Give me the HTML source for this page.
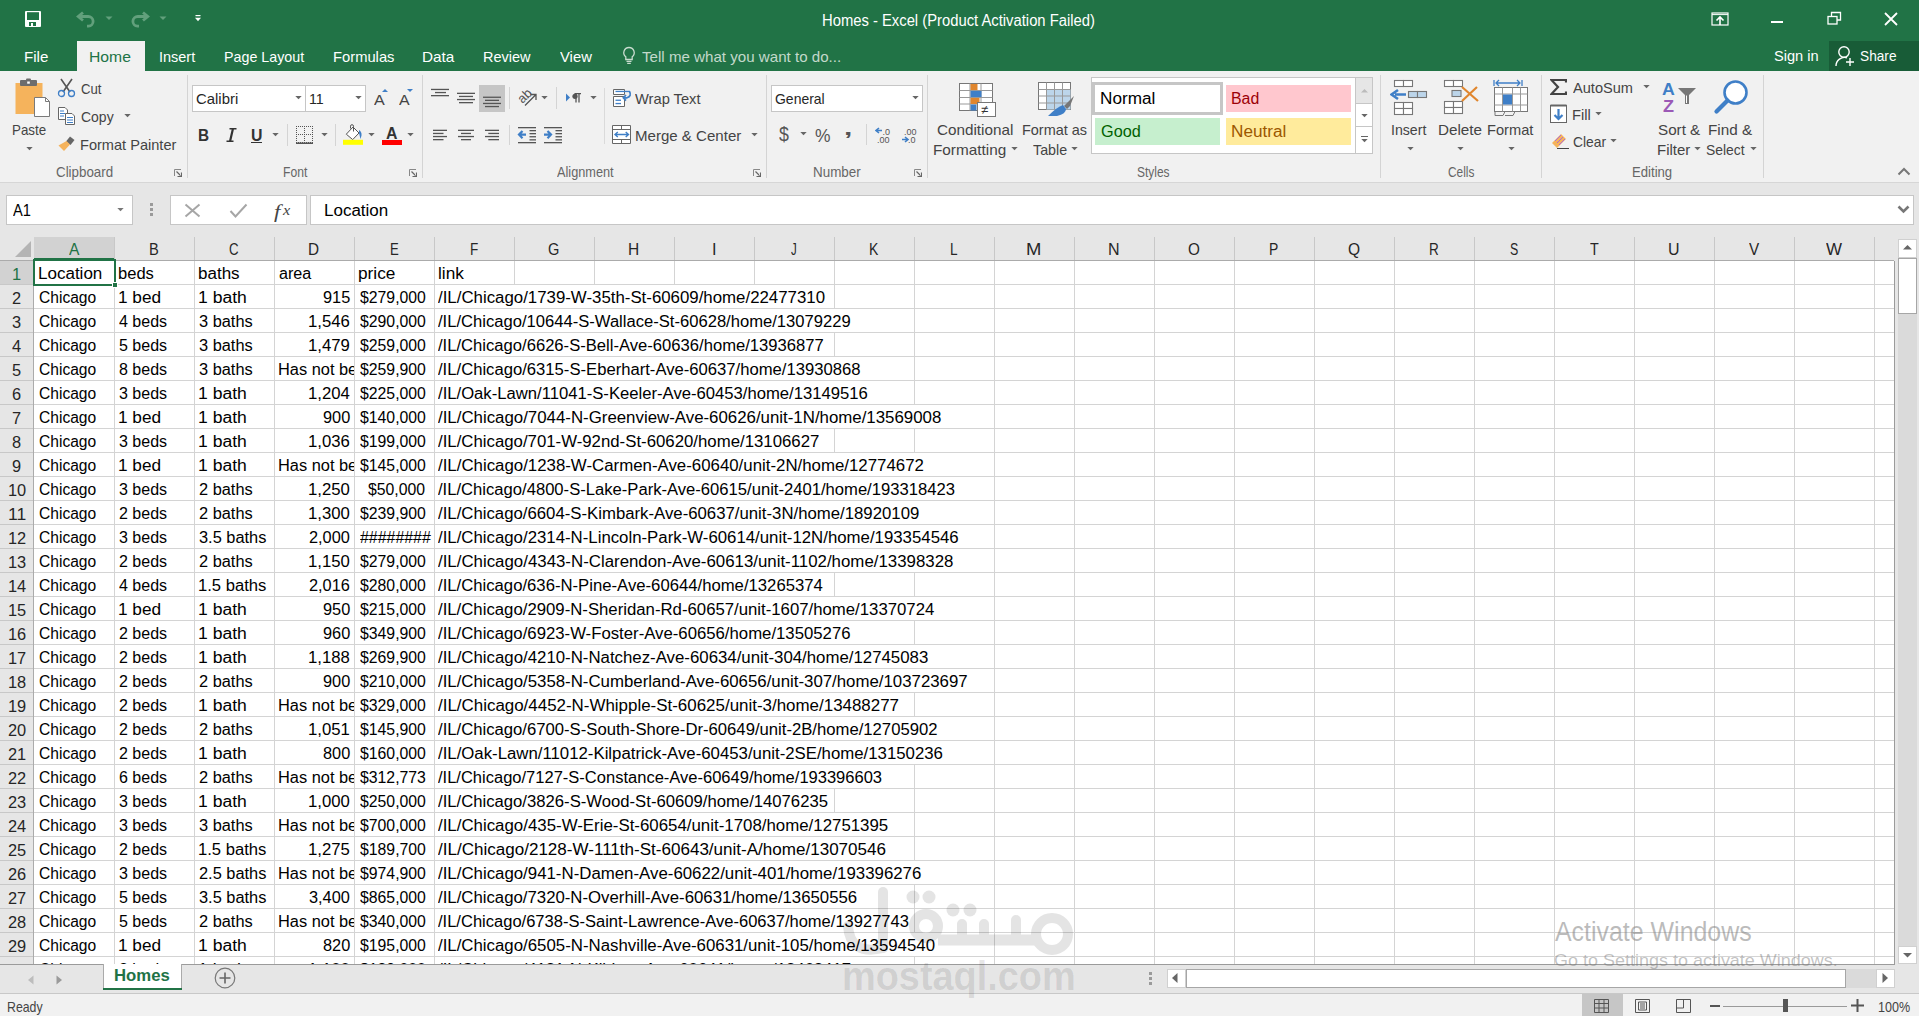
<!DOCTYPE html><html><head><meta charset="utf-8"><style>*{box-sizing:border-box;margin:0;padding:0}
html,body{width:1919px;height:1016px;overflow:hidden;background:#e6e6e6;font-family:"Liberation Sans",sans-serif}
.a{position:absolute}
.t{position:absolute;white-space:nowrap;line-height:1;transform-origin:0 0}
</style></head><body>
<div class="a" style="left:0px;top:0px;width:1919px;height:71px;background:#217346"></div>
<div class="a" style="left:0px;top:71px;width:1919px;height:112px;background:#f1f1f1"></div>
<div class="a" style="left:0px;top:182px;width:1919px;height:1px;background:#d6d6d6"></div>
<div class="a" style="left:0px;top:183px;width:1919px;height:54px;background:#e6e6e6"></div>
<div class="a" style="left:6px;top:195px;width:127px;height:30px;background:#fff;border:1px solid #c6c6c6"></div>
<div class="a" style="left:170px;top:195px;width:137px;height:30px;background:#fff;border:1px solid #c6c6c6"></div>
<div class="a" style="left:310px;top:195px;width:1604px;height:30px;background:#fff;border:1px solid #c6c6c6"></div>
<div class="a" style="left:0px;top:237px;width:1894px;height:24px;background:#e6e6e6"></div>
<div class="a" style="left:34px;top:237px;width:81px;height:23px;background:#d2d2d2"></div>
<div class="a" style="left:0px;top:260px;width:1894px;height:1px;background:#ababab"></div>
<div class="a" style="left:34px;top:258px;width:81px;height:2px;background:#217346"></div>
<div class="a" style="left:0px;top:261px;width:34px;height:703px;background:#e6e6e6"></div>
<div class="a" style="left:0px;top:261px;width:34px;height:23px;background:#d2d2d2"></div>
<div class="a" style="left:33px;top:261px;width:1px;height:703px;background:#ababab"></div>
<svg class="a" style="left:15px;top:241px" width="17" height="17"><polygon points="16,0 16,16 0,16" fill="#b4b4b4"/></svg>
<div class="a" style="left:34px;top:261px;width:1860px;height:703px;background:#fff"></div>
<div class="a" style="left:114px;top:261px;width:1px;height:703px;background:#d4d4d4"></div><div class="a" style="left:114px;top:237px;width:1px;height:23px;background:#c8c8c8"></div><div class="a" style="left:194px;top:261px;width:1px;height:703px;background:#d4d4d4"></div><div class="a" style="left:194px;top:237px;width:1px;height:23px;background:#c8c8c8"></div><div class="a" style="left:274px;top:261px;width:1px;height:703px;background:#d4d4d4"></div><div class="a" style="left:274px;top:237px;width:1px;height:23px;background:#c8c8c8"></div><div class="a" style="left:354px;top:261px;width:1px;height:703px;background:#d4d4d4"></div><div class="a" style="left:354px;top:237px;width:1px;height:23px;background:#c8c8c8"></div><div class="a" style="left:434px;top:261px;width:1px;height:703px;background:#d4d4d4"></div><div class="a" style="left:434px;top:237px;width:1px;height:23px;background:#c8c8c8"></div><div class="a" style="left:514px;top:261px;width:1px;height:703px;background:#d4d4d4"></div><div class="a" style="left:514px;top:237px;width:1px;height:23px;background:#c8c8c8"></div><div class="a" style="left:594px;top:261px;width:1px;height:703px;background:#d4d4d4"></div><div class="a" style="left:594px;top:237px;width:1px;height:23px;background:#c8c8c8"></div><div class="a" style="left:674px;top:261px;width:1px;height:703px;background:#d4d4d4"></div><div class="a" style="left:674px;top:237px;width:1px;height:23px;background:#c8c8c8"></div><div class="a" style="left:754px;top:261px;width:1px;height:703px;background:#d4d4d4"></div><div class="a" style="left:754px;top:237px;width:1px;height:23px;background:#c8c8c8"></div><div class="a" style="left:834px;top:261px;width:1px;height:703px;background:#d4d4d4"></div><div class="a" style="left:834px;top:237px;width:1px;height:23px;background:#c8c8c8"></div><div class="a" style="left:914px;top:261px;width:1px;height:703px;background:#d4d4d4"></div><div class="a" style="left:914px;top:237px;width:1px;height:23px;background:#c8c8c8"></div><div class="a" style="left:994px;top:261px;width:1px;height:703px;background:#d4d4d4"></div><div class="a" style="left:994px;top:237px;width:1px;height:23px;background:#c8c8c8"></div><div class="a" style="left:1074px;top:261px;width:1px;height:703px;background:#d4d4d4"></div><div class="a" style="left:1074px;top:237px;width:1px;height:23px;background:#c8c8c8"></div><div class="a" style="left:1154px;top:261px;width:1px;height:703px;background:#d4d4d4"></div><div class="a" style="left:1154px;top:237px;width:1px;height:23px;background:#c8c8c8"></div><div class="a" style="left:1234px;top:261px;width:1px;height:703px;background:#d4d4d4"></div><div class="a" style="left:1234px;top:237px;width:1px;height:23px;background:#c8c8c8"></div><div class="a" style="left:1314px;top:261px;width:1px;height:703px;background:#d4d4d4"></div><div class="a" style="left:1314px;top:237px;width:1px;height:23px;background:#c8c8c8"></div><div class="a" style="left:1394px;top:261px;width:1px;height:703px;background:#d4d4d4"></div><div class="a" style="left:1394px;top:237px;width:1px;height:23px;background:#c8c8c8"></div><div class="a" style="left:1474px;top:261px;width:1px;height:703px;background:#d4d4d4"></div><div class="a" style="left:1474px;top:237px;width:1px;height:23px;background:#c8c8c8"></div><div class="a" style="left:1554px;top:261px;width:1px;height:703px;background:#d4d4d4"></div><div class="a" style="left:1554px;top:237px;width:1px;height:23px;background:#c8c8c8"></div><div class="a" style="left:1634px;top:261px;width:1px;height:703px;background:#d4d4d4"></div><div class="a" style="left:1634px;top:237px;width:1px;height:23px;background:#c8c8c8"></div><div class="a" style="left:1714px;top:261px;width:1px;height:703px;background:#d4d4d4"></div><div class="a" style="left:1714px;top:237px;width:1px;height:23px;background:#c8c8c8"></div><div class="a" style="left:1794px;top:261px;width:1px;height:703px;background:#d4d4d4"></div><div class="a" style="left:1794px;top:237px;width:1px;height:23px;background:#c8c8c8"></div><div class="a" style="left:1874px;top:261px;width:1px;height:703px;background:#d4d4d4"></div><div class="a" style="left:1874px;top:237px;width:1px;height:23px;background:#c8c8c8"></div><div class="a" style="left:34px;top:284px;width:1860px;height:1px;background:#d4d4d4"></div><div class="a" style="left:0;top:284px;width:33px;height:1px;background:#c8c8c8"></div><div class="a" style="left:34px;top:308px;width:1860px;height:1px;background:#d4d4d4"></div><div class="a" style="left:0;top:308px;width:33px;height:1px;background:#c8c8c8"></div><div class="a" style="left:34px;top:332px;width:1860px;height:1px;background:#d4d4d4"></div><div class="a" style="left:0;top:332px;width:33px;height:1px;background:#c8c8c8"></div><div class="a" style="left:34px;top:356px;width:1860px;height:1px;background:#d4d4d4"></div><div class="a" style="left:0;top:356px;width:33px;height:1px;background:#c8c8c8"></div><div class="a" style="left:34px;top:380px;width:1860px;height:1px;background:#d4d4d4"></div><div class="a" style="left:0;top:380px;width:33px;height:1px;background:#c8c8c8"></div><div class="a" style="left:34px;top:404px;width:1860px;height:1px;background:#d4d4d4"></div><div class="a" style="left:0;top:404px;width:33px;height:1px;background:#c8c8c8"></div><div class="a" style="left:34px;top:428px;width:1860px;height:1px;background:#d4d4d4"></div><div class="a" style="left:0;top:428px;width:33px;height:1px;background:#c8c8c8"></div><div class="a" style="left:34px;top:452px;width:1860px;height:1px;background:#d4d4d4"></div><div class="a" style="left:0;top:452px;width:33px;height:1px;background:#c8c8c8"></div><div class="a" style="left:34px;top:476px;width:1860px;height:1px;background:#d4d4d4"></div><div class="a" style="left:0;top:476px;width:33px;height:1px;background:#c8c8c8"></div><div class="a" style="left:34px;top:500px;width:1860px;height:1px;background:#d4d4d4"></div><div class="a" style="left:0;top:500px;width:33px;height:1px;background:#c8c8c8"></div><div class="a" style="left:34px;top:524px;width:1860px;height:1px;background:#d4d4d4"></div><div class="a" style="left:0;top:524px;width:33px;height:1px;background:#c8c8c8"></div><div class="a" style="left:34px;top:548px;width:1860px;height:1px;background:#d4d4d4"></div><div class="a" style="left:0;top:548px;width:33px;height:1px;background:#c8c8c8"></div><div class="a" style="left:34px;top:572px;width:1860px;height:1px;background:#d4d4d4"></div><div class="a" style="left:0;top:572px;width:33px;height:1px;background:#c8c8c8"></div><div class="a" style="left:34px;top:596px;width:1860px;height:1px;background:#d4d4d4"></div><div class="a" style="left:0;top:596px;width:33px;height:1px;background:#c8c8c8"></div><div class="a" style="left:34px;top:620px;width:1860px;height:1px;background:#d4d4d4"></div><div class="a" style="left:0;top:620px;width:33px;height:1px;background:#c8c8c8"></div><div class="a" style="left:34px;top:644px;width:1860px;height:1px;background:#d4d4d4"></div><div class="a" style="left:0;top:644px;width:33px;height:1px;background:#c8c8c8"></div><div class="a" style="left:34px;top:668px;width:1860px;height:1px;background:#d4d4d4"></div><div class="a" style="left:0;top:668px;width:33px;height:1px;background:#c8c8c8"></div><div class="a" style="left:34px;top:692px;width:1860px;height:1px;background:#d4d4d4"></div><div class="a" style="left:0;top:692px;width:33px;height:1px;background:#c8c8c8"></div><div class="a" style="left:34px;top:716px;width:1860px;height:1px;background:#d4d4d4"></div><div class="a" style="left:0;top:716px;width:33px;height:1px;background:#c8c8c8"></div><div class="a" style="left:34px;top:740px;width:1860px;height:1px;background:#d4d4d4"></div><div class="a" style="left:0;top:740px;width:33px;height:1px;background:#c8c8c8"></div><div class="a" style="left:34px;top:764px;width:1860px;height:1px;background:#d4d4d4"></div><div class="a" style="left:0;top:764px;width:33px;height:1px;background:#c8c8c8"></div><div class="a" style="left:34px;top:788px;width:1860px;height:1px;background:#d4d4d4"></div><div class="a" style="left:0;top:788px;width:33px;height:1px;background:#c8c8c8"></div><div class="a" style="left:34px;top:812px;width:1860px;height:1px;background:#d4d4d4"></div><div class="a" style="left:0;top:812px;width:33px;height:1px;background:#c8c8c8"></div><div class="a" style="left:34px;top:836px;width:1860px;height:1px;background:#d4d4d4"></div><div class="a" style="left:0;top:836px;width:33px;height:1px;background:#c8c8c8"></div><div class="a" style="left:34px;top:860px;width:1860px;height:1px;background:#d4d4d4"></div><div class="a" style="left:0;top:860px;width:33px;height:1px;background:#c8c8c8"></div><div class="a" style="left:34px;top:884px;width:1860px;height:1px;background:#d4d4d4"></div><div class="a" style="left:0;top:884px;width:33px;height:1px;background:#c8c8c8"></div><div class="a" style="left:34px;top:908px;width:1860px;height:1px;background:#d4d4d4"></div><div class="a" style="left:0;top:908px;width:33px;height:1px;background:#c8c8c8"></div><div class="a" style="left:34px;top:932px;width:1860px;height:1px;background:#d4d4d4"></div><div class="a" style="left:0;top:932px;width:33px;height:1px;background:#c8c8c8"></div><div class="a" style="left:34px;top:956px;width:1860px;height:1px;background:#d4d4d4"></div><div class="a" style="left:0;top:956px;width:33px;height:1px;background:#c8c8c8"></div>
<div class="a" style="left:514px;top:285px;width:241px;height:23px;background:#fff"></div>
<div class="a" style="left:514px;top:309px;width:321px;height:23px;background:#fff"></div>
<div class="a" style="left:514px;top:333px;width:241px;height:23px;background:#fff"></div>
<div class="a" style="left:514px;top:357px;width:321px;height:23px;background:#fff"></div>
<div class="a" style="left:514px;top:381px;width:321px;height:23px;background:#fff"></div>
<div class="a" style="left:514px;top:405px;width:401px;height:23px;background:#fff"></div>
<div class="a" style="left:514px;top:429px;width:241px;height:23px;background:#fff"></div>
<div class="a" style="left:514px;top:453px;width:401px;height:23px;background:#fff"></div>
<div class="a" style="left:514px;top:477px;width:401px;height:23px;background:#fff"></div>
<div class="a" style="left:514px;top:501px;width:401px;height:23px;background:#fff"></div>
<div class="a" style="left:514px;top:525px;width:401px;height:23px;background:#fff"></div>
<div class="a" style="left:514px;top:549px;width:401px;height:23px;background:#fff"></div>
<div class="a" style="left:514px;top:573px;width:241px;height:23px;background:#fff"></div>
<div class="a" style="left:514px;top:597px;width:401px;height:23px;background:#fff"></div>
<div class="a" style="left:514px;top:621px;width:321px;height:23px;background:#fff"></div>
<div class="a" style="left:514px;top:645px;width:401px;height:23px;background:#fff"></div>
<div class="a" style="left:514px;top:669px;width:401px;height:23px;background:#fff"></div>
<div class="a" style="left:514px;top:693px;width:321px;height:23px;background:#fff"></div>
<div class="a" style="left:514px;top:717px;width:401px;height:23px;background:#fff"></div>
<div class="a" style="left:514px;top:741px;width:401px;height:23px;background:#fff"></div>
<div class="a" style="left:514px;top:765px;width:321px;height:23px;background:#fff"></div>
<div class="a" style="left:514px;top:789px;width:241px;height:23px;background:#fff"></div>
<div class="a" style="left:514px;top:813px;width:321px;height:23px;background:#fff"></div>
<div class="a" style="left:514px;top:837px;width:321px;height:23px;background:#fff"></div>
<div class="a" style="left:514px;top:861px;width:401px;height:23px;background:#fff"></div>
<div class="a" style="left:514px;top:885px;width:321px;height:23px;background:#fff"></div>
<div class="a" style="left:514px;top:909px;width:321px;height:23px;background:#fff"></div>
<div class="a" style="left:514px;top:933px;width:401px;height:23px;background:#fff"></div>
<div class="a" style="left:1894px;top:261px;width:1px;height:704px;background:#9b9b9b"></div>
<div class="a" style="left:34px;top:964px;width:1861px;height:1px;background:#9b9b9b"></div>
<div class="a" style="left:33px;top:259px;width:83px;height:27px;border:2px solid #217346"></div>
<div class="a" style="left:112px;top:282px;width:6px;height:6px;background:#217346;border:1px solid #fff"></div>
<div class="t" style="left:37.64px;top:266px;font-size:16px;color:#000;transform:scaleX(1.0632)">Location</div>
<div class="t" style="left:117.67px;top:266px;font-size:16px;color:#000;transform:scaleX(1.0343)">beds</div>
<div class="t" style="left:197.64px;top:266px;font-size:16px;color:#000;transform:scaleX(1.0629)">baths</div>
<div class="t" style="left:278.70px;top:266px;font-size:16px;color:#000;transform:scaleX(1.0092)">area</div>
<div class="t" style="left:357.62px;top:266px;font-size:16px;color:#000;transform:scaleX(1.0766)">price</div>
<div class="t" style="left:437.62px;top:266px;font-size:16px;color:#000;transform:scaleX(1.0771)">link</div>
<div class="t" style="left:38.70px;top:290px;font-size:16px;color:#000;transform:scaleX(0.9742)">Chicago</div>
<div class="t" style="left:117.63px;top:290px;font-size:16px;color:#000;transform:scaleX(1.0748)">1 bed</div>
<div class="t" style="left:197.60px;top:290px;font-size:16px;color:#000;transform:scaleX(1.0961)">1 bath</div>
<div class="t" style="left:323.08px;top:290px;font-size:16px;color:#000;transform:scaleX(1.0197)">915</div>
<div class="t" style="left:359.50px;top:290px;font-size:16px;color:#000;transform:scaleX(0.9875)">$279,000</div>
<div class="t" style="left:438.00px;top:290px;font-size:16px;color:#000;transform:scaleX(1.0518)">/IL/Chicago/1739-W-35th-St-60609/home/22477310</div>
<div class="t" style="left:38.70px;top:314px;font-size:16px;color:#000;transform:scaleX(0.9742)">Chicago</div>
<div class="t" style="left:118.70px;top:314px;font-size:16px;color:#000;transform:scaleX(0.9997)">4 beds</div>
<div class="t" style="left:198.70px;top:314px;font-size:16px;color:#000;transform:scaleX(1.0233)">3 baths</div>
<div class="t" style="left:308.44px;top:314px;font-size:16px;color:#000;transform:scaleX(1.0453)">1,546</div>
<div class="t" style="left:359.50px;top:314px;font-size:16px;color:#000;transform:scaleX(0.9875)">$290,000</div>
<div class="t" style="left:438.00px;top:314px;font-size:16px;color:#000;transform:scaleX(1.0372)">/IL/Chicago/10644-S-Wallace-St-60628/home/13079229</div>
<div class="t" style="left:38.70px;top:338px;font-size:16px;color:#000;transform:scaleX(0.9742)">Chicago</div>
<div class="t" style="left:118.70px;top:338px;font-size:16px;color:#000;transform:scaleX(0.9997)">5 beds</div>
<div class="t" style="left:198.70px;top:338px;font-size:16px;color:#000;transform:scaleX(1.0233)">3 baths</div>
<div class="t" style="left:308.44px;top:338px;font-size:16px;color:#000;transform:scaleX(1.0453)">1,479</div>
<div class="t" style="left:359.50px;top:338px;font-size:16px;color:#000;transform:scaleX(0.9875)">$259,000</div>
<div class="t" style="left:438.00px;top:338px;font-size:16px;color:#000;transform:scaleX(1.0383)">/IL/Chicago/6626-S-Bell-Ave-60636/home/13936877</div>
<div class="t" style="left:38.70px;top:362px;font-size:16px;color:#000;transform:scaleX(0.9742)">Chicago</div>
<div class="t" style="left:118.70px;top:362px;font-size:16px;color:#000;transform:scaleX(0.9997)">8 beds</div>
<div class="t" style="left:198.70px;top:362px;font-size:16px;color:#000;transform:scaleX(1.0233)">3 baths</div>
<div class="a" style="left:275px;top:356px;width:79px;height:23px;overflow:hidden"><div class="t" style="left:2.68px;top:6px;font-size:16px;color:#000;transform:scaleX(1.0234)">Has not be</div></div>
<div class="t" style="left:359.50px;top:362px;font-size:16px;color:#000;transform:scaleX(0.9875)">$259,900</div>
<div class="t" style="left:438.00px;top:362px;font-size:16px;color:#000;transform:scaleX(1.0402)">/IL/Chicago/6315-S-Eberhart-Ave-60637/home/13930868</div>
<div class="t" style="left:38.70px;top:386px;font-size:16px;color:#000;transform:scaleX(0.9742)">Chicago</div>
<div class="t" style="left:118.70px;top:386px;font-size:16px;color:#000;transform:scaleX(0.9997)">3 beds</div>
<div class="t" style="left:197.60px;top:386px;font-size:16px;color:#000;transform:scaleX(1.0961)">1 bath</div>
<div class="t" style="left:308.44px;top:386px;font-size:16px;color:#000;transform:scaleX(1.0453)">1,204</div>
<div class="t" style="left:359.50px;top:386px;font-size:16px;color:#000;transform:scaleX(0.9875)">$225,000</div>
<div class="t" style="left:438.00px;top:386px;font-size:16px;color:#000;transform:scaleX(1.0406)">/IL/Oak-Lawn/11041-S-Keeler-Ave-60453/home/13149516</div>
<div class="t" style="left:38.70px;top:410px;font-size:16px;color:#000;transform:scaleX(0.9742)">Chicago</div>
<div class="t" style="left:117.63px;top:410px;font-size:16px;color:#000;transform:scaleX(1.0748)">1 bed</div>
<div class="t" style="left:197.60px;top:410px;font-size:16px;color:#000;transform:scaleX(1.0961)">1 bath</div>
<div class="t" style="left:323.08px;top:410px;font-size:16px;color:#000;transform:scaleX(1.0197)">900</div>
<div class="t" style="left:359.50px;top:410px;font-size:16px;color:#000;transform:scaleX(0.9875)">$140,000</div>
<div class="t" style="left:438.00px;top:410px;font-size:16px;color:#000;transform:scaleX(1.0524)">/IL/Chicago/7044-N-Greenview-Ave-60626/unit-1N/home/13569008</div>
<div class="t" style="left:38.70px;top:434px;font-size:16px;color:#000;transform:scaleX(0.9742)">Chicago</div>
<div class="t" style="left:118.70px;top:434px;font-size:16px;color:#000;transform:scaleX(0.9997)">3 beds</div>
<div class="t" style="left:197.60px;top:434px;font-size:16px;color:#000;transform:scaleX(1.0961)">1 bath</div>
<div class="t" style="left:308.44px;top:434px;font-size:16px;color:#000;transform:scaleX(1.0453)">1,036</div>
<div class="t" style="left:359.50px;top:434px;font-size:16px;color:#000;transform:scaleX(0.9875)">$199,000</div>
<div class="t" style="left:438.00px;top:434px;font-size:16px;color:#000;transform:scaleX(1.0490)">/IL/Chicago/701-W-92nd-St-60620/home/13106627</div>
<div class="t" style="left:38.70px;top:458px;font-size:16px;color:#000;transform:scaleX(0.9742)">Chicago</div>
<div class="t" style="left:117.63px;top:458px;font-size:16px;color:#000;transform:scaleX(1.0748)">1 bed</div>
<div class="t" style="left:197.60px;top:458px;font-size:16px;color:#000;transform:scaleX(1.0961)">1 bath</div>
<div class="a" style="left:275px;top:452px;width:79px;height:23px;overflow:hidden"><div class="t" style="left:2.68px;top:6px;font-size:16px;color:#000;transform:scaleX(1.0234)">Has not be</div></div>
<div class="t" style="left:359.50px;top:458px;font-size:16px;color:#000;transform:scaleX(0.9875)">$145,000</div>
<div class="t" style="left:438.00px;top:458px;font-size:16px;color:#000;transform:scaleX(1.0519)">/IL/Chicago/1238-W-Carmen-Ave-60640/unit-2N/home/12774672</div>
<div class="t" style="left:38.70px;top:482px;font-size:16px;color:#000;transform:scaleX(0.9742)">Chicago</div>
<div class="t" style="left:118.70px;top:482px;font-size:16px;color:#000;transform:scaleX(0.9997)">3 beds</div>
<div class="t" style="left:198.70px;top:482px;font-size:16px;color:#000;transform:scaleX(1.0233)">2 baths</div>
<div class="t" style="left:308.44px;top:482px;font-size:16px;color:#000;transform:scaleX(1.0453)">1,250</div>
<div class="t" style="left:368.31px;top:482px;font-size:16px;color:#000;transform:scaleX(0.9871)">$50,000</div>
<div class="t" style="left:438.00px;top:482px;font-size:16px;color:#000;transform:scaleX(1.0383)">/IL/Chicago/4800-S-Lake-Park-Ave-60615/unit-2401/home/193318423</div>
<div class="t" style="left:38.70px;top:506px;font-size:16px;color:#000;transform:scaleX(0.9742)">Chicago</div>
<div class="t" style="left:118.70px;top:506px;font-size:16px;color:#000;transform:scaleX(0.9997)">2 beds</div>
<div class="t" style="left:198.70px;top:506px;font-size:16px;color:#000;transform:scaleX(1.0233)">2 baths</div>
<div class="t" style="left:308.44px;top:506px;font-size:16px;color:#000;transform:scaleX(1.0453)">1,300</div>
<div class="t" style="left:359.50px;top:506px;font-size:16px;color:#000;transform:scaleX(0.9875)">$239,900</div>
<div class="t" style="left:438.00px;top:506px;font-size:16px;color:#000;transform:scaleX(1.0473)">/IL/Chicago/6604-S-Kimbark-Ave-60637/unit-3N/home/18920109</div>
<div class="t" style="left:38.70px;top:530px;font-size:16px;color:#000;transform:scaleX(0.9742)">Chicago</div>
<div class="t" style="left:118.70px;top:530px;font-size:16px;color:#000;transform:scaleX(0.9997)">3 beds</div>
<div class="t" style="left:198.70px;top:530px;font-size:16px;color:#000;transform:scaleX(1.0232)">3.5 baths</div>
<div class="t" style="left:309.48px;top:530px;font-size:16px;color:#000;transform:scaleX(1.0193)">2,000</div>
<div class="t" style="left:359.50px;top:530px;font-size:16px;color:#000;transform:scaleX(0.9945)">########</div>
<div class="t" style="left:438.00px;top:530px;font-size:16px;color:#000;transform:scaleX(1.0497)">/IL/Chicago/2314-N-Lincoln-Park-W-60614/unit-12N/home/193354546</div>
<div class="t" style="left:38.70px;top:554px;font-size:16px;color:#000;transform:scaleX(0.9742)">Chicago</div>
<div class="t" style="left:118.70px;top:554px;font-size:16px;color:#000;transform:scaleX(0.9997)">2 beds</div>
<div class="t" style="left:198.70px;top:554px;font-size:16px;color:#000;transform:scaleX(1.0233)">2 baths</div>
<div class="t" style="left:308.44px;top:554px;font-size:16px;color:#000;transform:scaleX(1.0453)">1,150</div>
<div class="t" style="left:359.50px;top:554px;font-size:16px;color:#000;transform:scaleX(0.9875)">$279,000</div>
<div class="t" style="left:438.00px;top:554px;font-size:16px;color:#000;transform:scaleX(1.0528)">/IL/Chicago/4343-N-Clarendon-Ave-60613/unit-1102/home/13398328</div>
<div class="t" style="left:38.70px;top:578px;font-size:16px;color:#000;transform:scaleX(0.9742)">Chicago</div>
<div class="t" style="left:118.70px;top:578px;font-size:16px;color:#000;transform:scaleX(0.9997)">4 beds</div>
<div class="t" style="left:197.66px;top:578px;font-size:16px;color:#000;transform:scaleX(1.0389)">1.5 baths</div>
<div class="t" style="left:309.48px;top:578px;font-size:16px;color:#000;transform:scaleX(1.0193)">2,016</div>
<div class="t" style="left:359.50px;top:578px;font-size:16px;color:#000;transform:scaleX(0.9875)">$280,000</div>
<div class="t" style="left:438.00px;top:578px;font-size:16px;color:#000;transform:scaleX(1.0433)">/IL/Chicago/636-N-Pine-Ave-60644/home/13265374</div>
<div class="t" style="left:38.70px;top:602px;font-size:16px;color:#000;transform:scaleX(0.9742)">Chicago</div>
<div class="t" style="left:117.63px;top:602px;font-size:16px;color:#000;transform:scaleX(1.0748)">1 bed</div>
<div class="t" style="left:197.60px;top:602px;font-size:16px;color:#000;transform:scaleX(1.0961)">1 bath</div>
<div class="t" style="left:323.08px;top:602px;font-size:16px;color:#000;transform:scaleX(1.0197)">950</div>
<div class="t" style="left:359.50px;top:602px;font-size:16px;color:#000;transform:scaleX(0.9875)">$215,000</div>
<div class="t" style="left:438.00px;top:602px;font-size:16px;color:#000;transform:scaleX(1.0468)">/IL/Chicago/2909-N-Sheridan-Rd-60657/unit-1607/home/13370724</div>
<div class="t" style="left:38.70px;top:626px;font-size:16px;color:#000;transform:scaleX(0.9742)">Chicago</div>
<div class="t" style="left:118.70px;top:626px;font-size:16px;color:#000;transform:scaleX(0.9997)">2 beds</div>
<div class="t" style="left:197.60px;top:626px;font-size:16px;color:#000;transform:scaleX(1.0961)">1 bath</div>
<div class="t" style="left:323.08px;top:626px;font-size:16px;color:#000;transform:scaleX(1.0197)">960</div>
<div class="t" style="left:359.50px;top:626px;font-size:16px;color:#000;transform:scaleX(0.9875)">$349,900</div>
<div class="t" style="left:438.00px;top:626px;font-size:16px;color:#000;transform:scaleX(1.0461)">/IL/Chicago/6923-W-Foster-Ave-60656/home/13505276</div>
<div class="t" style="left:38.70px;top:650px;font-size:16px;color:#000;transform:scaleX(0.9742)">Chicago</div>
<div class="t" style="left:118.70px;top:650px;font-size:16px;color:#000;transform:scaleX(0.9997)">2 beds</div>
<div class="t" style="left:197.60px;top:650px;font-size:16px;color:#000;transform:scaleX(1.0961)">1 bath</div>
<div class="t" style="left:308.44px;top:650px;font-size:16px;color:#000;transform:scaleX(1.0453)">1,188</div>
<div class="t" style="left:359.50px;top:650px;font-size:16px;color:#000;transform:scaleX(0.9875)">$269,900</div>
<div class="t" style="left:438.00px;top:650px;font-size:16px;color:#000;transform:scaleX(1.0505)">/IL/Chicago/4210-N-Natchez-Ave-60634/unit-304/home/12745083</div>
<div class="t" style="left:38.70px;top:674px;font-size:16px;color:#000;transform:scaleX(0.9742)">Chicago</div>
<div class="t" style="left:118.70px;top:674px;font-size:16px;color:#000;transform:scaleX(0.9997)">2 beds</div>
<div class="t" style="left:198.70px;top:674px;font-size:16px;color:#000;transform:scaleX(1.0233)">2 baths</div>
<div class="t" style="left:323.08px;top:674px;font-size:16px;color:#000;transform:scaleX(1.0197)">900</div>
<div class="t" style="left:359.50px;top:674px;font-size:16px;color:#000;transform:scaleX(0.9875)">$210,000</div>
<div class="t" style="left:438.00px;top:674px;font-size:16px;color:#000;transform:scaleX(1.0508)">/IL/Chicago/5358-N-Cumberland-Ave-60656/unit-307/home/103723697</div>
<div class="t" style="left:38.70px;top:698px;font-size:16px;color:#000;transform:scaleX(0.9742)">Chicago</div>
<div class="t" style="left:118.70px;top:698px;font-size:16px;color:#000;transform:scaleX(0.9997)">2 beds</div>
<div class="t" style="left:197.60px;top:698px;font-size:16px;color:#000;transform:scaleX(1.0961)">1 bath</div>
<div class="a" style="left:275px;top:692px;width:79px;height:23px;overflow:hidden"><div class="t" style="left:2.68px;top:6px;font-size:16px;color:#000;transform:scaleX(1.0234)">Has not be</div></div>
<div class="t" style="left:359.50px;top:698px;font-size:16px;color:#000;transform:scaleX(0.9875)">$329,000</div>
<div class="t" style="left:438.00px;top:698px;font-size:16px;color:#000;transform:scaleX(1.0578)">/IL/Chicago/4452-N-Whipple-St-60625/unit-3/home/13488277</div>
<div class="t" style="left:38.70px;top:722px;font-size:16px;color:#000;transform:scaleX(0.9742)">Chicago</div>
<div class="t" style="left:118.70px;top:722px;font-size:16px;color:#000;transform:scaleX(0.9997)">2 beds</div>
<div class="t" style="left:198.70px;top:722px;font-size:16px;color:#000;transform:scaleX(1.0233)">2 baths</div>
<div class="t" style="left:308.44px;top:722px;font-size:16px;color:#000;transform:scaleX(1.0453)">1,051</div>
<div class="t" style="left:359.50px;top:722px;font-size:16px;color:#000;transform:scaleX(0.9875)">$145,900</div>
<div class="t" style="left:438.00px;top:722px;font-size:16px;color:#000;transform:scaleX(1.0419)">/IL/Chicago/6700-S-South-Shore-Dr-60649/unit-2B/home/12705902</div>
<div class="t" style="left:38.70px;top:746px;font-size:16px;color:#000;transform:scaleX(0.9742)">Chicago</div>
<div class="t" style="left:118.70px;top:746px;font-size:16px;color:#000;transform:scaleX(0.9997)">2 beds</div>
<div class="t" style="left:197.60px;top:746px;font-size:16px;color:#000;transform:scaleX(1.0961)">1 bath</div>
<div class="t" style="left:323.08px;top:746px;font-size:16px;color:#000;transform:scaleX(1.0197)">800</div>
<div class="t" style="left:359.50px;top:746px;font-size:16px;color:#000;transform:scaleX(0.9875)">$160,000</div>
<div class="t" style="left:438.00px;top:746px;font-size:16px;color:#000;transform:scaleX(1.0486)">/IL/Oak-Lawn/11012-Kilpatrick-Ave-60453/unit-2SE/home/13150236</div>
<div class="t" style="left:38.70px;top:770px;font-size:16px;color:#000;transform:scaleX(0.9742)">Chicago</div>
<div class="t" style="left:118.70px;top:770px;font-size:16px;color:#000;transform:scaleX(0.9997)">6 beds</div>
<div class="t" style="left:198.70px;top:770px;font-size:16px;color:#000;transform:scaleX(1.0233)">2 baths</div>
<div class="a" style="left:275px;top:764px;width:79px;height:23px;overflow:hidden"><div class="t" style="left:2.68px;top:6px;font-size:16px;color:#000;transform:scaleX(1.0234)">Has not be</div></div>
<div class="t" style="left:359.50px;top:770px;font-size:16px;color:#000;transform:scaleX(0.9875)">$312,773</div>
<div class="t" style="left:438.00px;top:770px;font-size:16px;color:#000;transform:scaleX(1.0321)">/IL/Chicago/7127-S-Constance-Ave-60649/home/193396603</div>
<div class="t" style="left:38.70px;top:794px;font-size:16px;color:#000;transform:scaleX(0.9742)">Chicago</div>
<div class="t" style="left:118.70px;top:794px;font-size:16px;color:#000;transform:scaleX(0.9997)">3 beds</div>
<div class="t" style="left:197.60px;top:794px;font-size:16px;color:#000;transform:scaleX(1.0961)">1 bath</div>
<div class="t" style="left:308.44px;top:794px;font-size:16px;color:#000;transform:scaleX(1.0453)">1,000</div>
<div class="t" style="left:359.50px;top:794px;font-size:16px;color:#000;transform:scaleX(0.9875)">$250,000</div>
<div class="t" style="left:438.00px;top:794px;font-size:16px;color:#000;transform:scaleX(1.0422)">/IL/Chicago/3826-S-Wood-St-60609/home/14076235</div>
<div class="t" style="left:38.70px;top:818px;font-size:16px;color:#000;transform:scaleX(0.9742)">Chicago</div>
<div class="t" style="left:118.70px;top:818px;font-size:16px;color:#000;transform:scaleX(0.9997)">3 beds</div>
<div class="t" style="left:198.70px;top:818px;font-size:16px;color:#000;transform:scaleX(1.0233)">3 baths</div>
<div class="a" style="left:275px;top:812px;width:79px;height:23px;overflow:hidden"><div class="t" style="left:2.68px;top:6px;font-size:16px;color:#000;transform:scaleX(1.0234)">Has not be</div></div>
<div class="t" style="left:359.50px;top:818px;font-size:16px;color:#000;transform:scaleX(0.9875)">$700,000</div>
<div class="t" style="left:438.00px;top:818px;font-size:16px;color:#000;transform:scaleX(1.0531)">/IL/Chicago/435-W-Erie-St-60654/unit-1708/home/12751395</div>
<div class="t" style="left:38.70px;top:842px;font-size:16px;color:#000;transform:scaleX(0.9742)">Chicago</div>
<div class="t" style="left:118.70px;top:842px;font-size:16px;color:#000;transform:scaleX(0.9997)">2 beds</div>
<div class="t" style="left:197.66px;top:842px;font-size:16px;color:#000;transform:scaleX(1.0389)">1.5 baths</div>
<div class="t" style="left:308.44px;top:842px;font-size:16px;color:#000;transform:scaleX(1.0453)">1,275</div>
<div class="t" style="left:359.50px;top:842px;font-size:16px;color:#000;transform:scaleX(0.9875)">$189,700</div>
<div class="t" style="left:438.00px;top:842px;font-size:16px;color:#000;transform:scaleX(1.0648)">/IL/Chicago/2128-W-111th-St-60643/unit-A/home/13070546</div>
<div class="t" style="left:38.70px;top:866px;font-size:16px;color:#000;transform:scaleX(0.9742)">Chicago</div>
<div class="t" style="left:118.70px;top:866px;font-size:16px;color:#000;transform:scaleX(0.9997)">3 beds</div>
<div class="t" style="left:198.70px;top:866px;font-size:16px;color:#000;transform:scaleX(1.0232)">2.5 baths</div>
<div class="a" style="left:275px;top:860px;width:79px;height:23px;overflow:hidden"><div class="t" style="left:2.68px;top:6px;font-size:16px;color:#000;transform:scaleX(1.0234)">Has not be</div></div>
<div class="t" style="left:359.50px;top:866px;font-size:16px;color:#000;transform:scaleX(0.9875)">$974,900</div>
<div class="t" style="left:438.00px;top:866px;font-size:16px;color:#000;transform:scaleX(1.0517)">/IL/Chicago/941-N-Damen-Ave-60622/unit-401/home/193396276</div>
<div class="t" style="left:38.70px;top:890px;font-size:16px;color:#000;transform:scaleX(0.9742)">Chicago</div>
<div class="t" style="left:118.70px;top:890px;font-size:16px;color:#000;transform:scaleX(0.9997)">5 beds</div>
<div class="t" style="left:198.70px;top:890px;font-size:16px;color:#000;transform:scaleX(1.0232)">3.5 baths</div>
<div class="t" style="left:309.48px;top:890px;font-size:16px;color:#000;transform:scaleX(1.0193)">3,400</div>
<div class="t" style="left:359.50px;top:890px;font-size:16px;color:#000;transform:scaleX(0.9875)">$865,000</div>
<div class="t" style="left:438.00px;top:890px;font-size:16px;color:#000;transform:scaleX(1.0480)">/IL/Chicago/7320-N-Overhill-Ave-60631/home/13650556</div>
<div class="t" style="left:38.70px;top:914px;font-size:16px;color:#000;transform:scaleX(0.9742)">Chicago</div>
<div class="t" style="left:118.70px;top:914px;font-size:16px;color:#000;transform:scaleX(0.9997)">5 beds</div>
<div class="t" style="left:198.70px;top:914px;font-size:16px;color:#000;transform:scaleX(1.0233)">2 baths</div>
<div class="a" style="left:275px;top:908px;width:79px;height:23px;overflow:hidden"><div class="t" style="left:2.68px;top:6px;font-size:16px;color:#000;transform:scaleX(1.0234)">Has not be</div></div>
<div class="t" style="left:359.50px;top:914px;font-size:16px;color:#000;transform:scaleX(0.9875)">$340,000</div>
<div class="t" style="left:438.00px;top:914px;font-size:16px;color:#000;transform:scaleX(1.0327)">/IL/Chicago/6738-S-Saint-Lawrence-Ave-60637/home/13927743</div>
<div class="t" style="left:38.70px;top:938px;font-size:16px;color:#000;transform:scaleX(0.9742)">Chicago</div>
<div class="t" style="left:117.63px;top:938px;font-size:16px;color:#000;transform:scaleX(1.0748)">1 bed</div>
<div class="t" style="left:197.60px;top:938px;font-size:16px;color:#000;transform:scaleX(1.0961)">1 bath</div>
<div class="t" style="left:323.08px;top:938px;font-size:16px;color:#000;transform:scaleX(1.0197)">820</div>
<div class="t" style="left:359.50px;top:938px;font-size:16px;color:#000;transform:scaleX(0.9875)">$195,000</div>
<div class="t" style="left:438.00px;top:938px;font-size:16px;color:#000;transform:scaleX(1.0510)">/IL/Chicago/6505-N-Nashville-Ave-60631/unit-105/home/13594540</div>
<svg class="a" style="left:25px;top:11px" width="16" height="16" viewBox="0 0 16 16"><rect x="0" y="0" width="16" height="16" rx="1" fill="#fff"/><rect x="2" y="1.2" width="12" height="7.8" fill="#217346"/><rect x="4" y="11" width="7" height="4" fill="#217346"/><rect x="6" y="12" width="2" height="3" fill="#fff"/></svg>
<svg class="a" style="left:76px;top:11px" width="20" height="18" viewBox="0 0 20 18"><path d="M7,1.5 L2.2,5.5 L7,9.5" fill="none" stroke="#62a07c" stroke-width="2.8"/><path d="M3,5.5 H12 A4.8,4.8 0 0 1 12.5,15.2 H11" fill="none" stroke="#62a07c" stroke-width="2.8"/></svg>
<svg class="a" style="left:105px;top:16px" width="8" height="5" viewBox="0 0 8 5"><path d="M0.5,0.5 H7.5 L4,4 Z" fill="#62a07c"/></svg>
<svg class="a" style="left:130px;top:11px" width="20" height="18" viewBox="0 0 20 18"><path d="M13,1.5 L17.8,5.5 L13,9.5" fill="none" stroke="#62a07c" stroke-width="2.8"/><path d="M17,5.5 H8 A4.8,4.8 0 0 0 7.5,15.2 H9" fill="none" stroke="#62a07c" stroke-width="2.8"/></svg>
<svg class="a" style="left:159px;top:16px" width="8" height="5" viewBox="0 0 8 5"><path d="M0.5,0.5 H7.5 L4,4 Z" fill="#62a07c"/></svg>
<svg class="a" style="left:195px;top:15px" width="6" height="7" viewBox="0 0 6 7"><rect x="0.5" y="0" width="5" height="1.2" fill="#fff"/><path d="M0,2.8 H6 L3,6.2 Z" fill="#fff"/></svg>
<svg class="a" style="left:1711px;top:12px" width="18" height="14" viewBox="0 0 18 14"><rect x="1" y="1" width="16" height="12" fill="none" stroke="#fff" stroke-width="1.2"/><line x1="1" y1="2.6" x2="17" y2="2.6" stroke="#fff" stroke-width="1"/><path d="M9,13 V5 M5.5,8.5 L9,5 L12.5,8.5" fill="none" stroke="#fff" stroke-width="1.6"/></svg>
<div class="a" style="left:1771px;top:21px;width:12px;height:2px;background:#fff"></div>
<svg class="a" style="left:1827px;top:11px" width="15" height="15" viewBox="0 0 15 15"><rect x="1" y="5.5" width="9" height="7.5" fill="none" stroke="#fff" stroke-width="1.3"/><path d="M4.5,5.5 V1.5 H13.5 V9 H10" fill="none" stroke="#fff" stroke-width="1.3"/></svg>
<svg class="a" style="left:1884px;top:12px" width="14" height="14" viewBox="0 0 14 14"><path d="M1,1 L13,13 M13,1 L1,13" stroke="#fff" stroke-width="1.8"/></svg>
<div class="t" style="left:821.58px;top:13px;font-size:16px;color:#fff;transform:scaleX(0.9244)">Homes - Excel (Product Activation Failed)</div>
<div class="a" style="left:77px;top:41px;width:68px;height:30px;background:#f1f1f1"></div>
<div class="t" style="left:23.99px;top:49px;font-size:15px;color:#fff;transform:scaleX(1.0076)">File</div>
<div class="t" style="left:88.95px;top:49px;font-size:15px;color:#217346;transform:scaleX(1.0473)">Home</div>
<div class="t" style="left:159.04px;top:49px;font-size:15px;color:#fff;transform:scaleX(0.9639)">Insert</div>
<div class="t" style="left:224.05px;top:49px;font-size:15px;color:#fff;transform:scaleX(0.9516)">Page Layout</div>
<div class="t" style="left:333.02px;top:49px;font-size:15px;color:#fff;transform:scaleX(0.9834)">Formulas</div>
<div class="t" style="left:421.98px;top:49px;font-size:15px;color:#fff;transform:scaleX(1.0210)">Data</div>
<div class="t" style="left:483.03px;top:49px;font-size:15px;color:#fff;transform:scaleX(0.9659)">Review</div>
<div class="t" style="left:560.00px;top:49px;font-size:15px;color:#fff;transform:scaleX(0.9874)">View</div>
<svg class="a" style="left:622px;top:46px" width="14" height="19" viewBox="0 0 14 19"><path d="M7,1.5 A5.2,5.2 0 0 1 10.2,10.8 V13.5 H3.8 V10.8 A5.2,5.2 0 0 1 7,1.5 Z" fill="none" stroke="#c9dccf" stroke-width="1.3"/><path d="M4.5,15.3 H9.5 M5.2,17.3 H8.8" stroke="#c9dccf" stroke-width="1.3"/></svg>
<div class="t" style="left:642.00px;top:49px;font-size:15px;color:#c3d9cb;transform:scaleX(1.0080)">Tell me what you want to do...</div>
<div class="t" style="left:1774.40px;top:48px;font-size:15px;color:#fff;transform:scaleX(0.9732)">Sign in</div>
<div class="a" style="left:1829px;top:41px;width:90px;height:30px;background:#185c37"></div>
<svg class="a" style="left:1835px;top:45px" width="20" height="22" viewBox="0 0 20 22"><circle cx="9" cy="7" r="5.2" fill="none" stroke="#fff" stroke-width="1.4"/><path d="M1,21 A8.5,8.5 0 0 1 12,12.8" fill="none" stroke="#fff" stroke-width="1.4"/><path d="M15,13 V21 M11,17 H19" stroke="#fff" stroke-width="1.4"/></svg>
<div class="t" style="left:1859.60px;top:48px;font-size:15px;color:#fff;transform:scaleX(0.9122)">Share</div>
<div class="a" style="left:187px;top:75px;width:1px;height:103px;background:#d4d4d4"></div>
<div class="a" style="left:422px;top:75px;width:1px;height:103px;background:#d4d4d4"></div>
<div class="a" style="left:766px;top:75px;width:1px;height:103px;background:#d4d4d4"></div>
<div class="a" style="left:927px;top:75px;width:1px;height:103px;background:#d4d4d4"></div>
<div class="a" style="left:1380px;top:75px;width:1px;height:103px;background:#d4d4d4"></div>
<div class="a" style="left:1541px;top:75px;width:1px;height:103px;background:#d4d4d4"></div>
<div class="a" style="left:1763px;top:75px;width:1px;height:103px;background:#d4d4d4"></div>
<svg class="a" style="left:14px;top:78px" width="37" height="40" viewBox="0 0 37 40"><rect x="1.5" y="5" width="27" height="31" fill="#f5b35c"/><rect x="6" y="2" width="17" height="6" rx="1" fill="#6d6d6d"/><rect x="12" y="0.5" width="5" height="4" rx="1" fill="#6d6d6d"/><rect x="13.2" y="3.5" width="2.6" height="2.2" fill="#fff"/><path d="M20.5,19.5 H31.5 L35.5,23.5 V38.5 H20.5 Z" fill="#fff" stroke="#7a7a7a" stroke-width="1"/><path d="M31.5,19.5 V23.5 H35.5" fill="none" stroke="#7a7a7a" stroke-width="1"/></svg>
<div class="t" style="left:11.91px;top:122px;font-size:15px;color:#444444;transform:scaleX(0.8888)">Paste</div>
<svg class="a" style="left:26px;top:147px" width="7" height="4" viewBox="0 0 7 4"><path d="M0.3,0 H6.7 L3.5,3.3 Z" fill="#666"/></svg>
<svg class="a" style="left:57px;top:78px" width="19" height="20" viewBox="0 0 19 20"><path d="M4,1 L13,14 M15,1 L6,14" stroke="#555" stroke-width="1.6"/><circle cx="4.5" cy="15.5" r="3" fill="none" stroke="#3f7fc7" stroke-width="1.3"/><circle cx="14.5" cy="15.5" r="3" fill="none" stroke="#3f7fc7" stroke-width="1.3"/></svg>
<div class="t" style="left:80.60px;top:81px;font-size:15px;color:#444444;transform:scaleX(0.8769)">Cut</div>
<svg class="a" style="left:57px;top:106px" width="19" height="20" viewBox="0 0 19 20"><path d="M1.5,1.5 H8 L10.5,4 V13.5 H1.5 Z" fill="#fff" stroke="#666" stroke-width="1"/><path d="M3,5 H7 M3,7.5 H8 M3,10 H7" stroke="#3f7fc7" stroke-width="1"/><path d="M8.5,7.5 H15 L17.5,10 V18.5 H8.5 Z" fill="#fff" stroke="#666" stroke-width="1"/><path d="M10,11.5 H16 M10,14 H16 M10,16.5 H16" stroke="#3f7fc7" stroke-width="1"/></svg>
<div class="t" style="left:80.60px;top:109px;font-size:15px;color:#444444;transform:scaleX(0.9319)">Copy</div>
<svg class="a" style="left:124px;top:114px" width="7" height="4" viewBox="0 0 7 4"><path d="M0.3,0 H6.7 L3.5,3.3 Z" fill="#666"/></svg>
<svg class="a" style="left:57px;top:135px" width="19" height="17" viewBox="0 0 19 17"><path d="M13,1.5 L17.5,5 L13.5,10 L9,6.5 Z" fill="#666"/><path d="M9.5,6 L13,9.5 L7,16 L1.5,10.5 Z" fill="#f5b35c"/></svg>
<div class="t" style="left:79.63px;top:137px;font-size:15px;color:#444444;transform:scaleX(0.9714)">Format Painter</div>
<div class="t" style="left:55.80px;top:164px;font-size:15px;color:#666666;transform:scaleX(0.8894)">Clipboard</div>
<svg class="a" style="left:174px;top:169px" width="8" height="8" viewBox="0 0 8 8"><path d="M0.5,7 V0.5 H7" fill="none" stroke="#888" stroke-width="1"/><path d="M2.5,2.5 L6.5,6.5 M7.5,3.5 V7.5 H3.5" fill="none" stroke="#666" stroke-width="1.2"/></svg>
<div class="a" style="left:192px;top:85px;width:114px;height:27px;background:#fff;border:1px solid #c6c6c6"></div>
<div class="a" style="left:305px;top:85px;width:61px;height:27px;background:#fff;border:1px solid #c6c6c6"></div>
<div class="t" style="left:195.60px;top:91px;font-size:15px;color:#262626;transform:scaleX(0.9934)">Calibri</div>
<svg class="a" style="left:295px;top:96px" width="7" height="4" viewBox="0 0 7 4"><path d="M0.3,0 H6.7 L3.5,3.3 Z" fill="#666"/></svg>
<div class="t" style="left:309.05px;top:91px;font-size:15px;color:#262626;transform:scaleX(0.9488)">11</div>
<svg class="a" style="left:355px;top:96px" width="7" height="4" viewBox="0 0 7 4"><path d="M0.3,0 H6.7 L3.5,3.3 Z" fill="#666"/></svg>
<div class="t" style="left:374.00px;top:91.5px;font-size:15px;color:#444444;transform:scaleX(1.0750)">A</div>
<svg class="a" style="left:382px;top:89px" width="6" height="3" viewBox="0 0 6 3"><path d="M0,3 L3,0 L6,3 Z" fill="#3f7fc7"/></svg>
<div class="t" style="left:399.00px;top:91.5px;font-size:15px;color:#444444;transform:scaleX(1.0600)">A</div>
<svg class="a" style="left:407px;top:89px" width="6" height="3" viewBox="0 0 6 3"><path d="M0,0 L3,3 L6,0 Z" fill="#3f7fc7"/></svg>
<div class="t" style="left:198.44px;top:128px;font-size:16px;color:#333;transform:scaleX(0.9600);font-weight:bold">B</div>
<svg class="a" style="left:226px;top:128px" width="11" height="14" viewBox="0 0 11 14"><path d="M3.5,0.5 H10.5 M0.5,13.5 H7.5 M7,0.5 L4,13.5" fill="none" stroke="#333" stroke-width="2.2"/></svg>
<div class="t" style="left:251.00px;top:128px;font-size:16px;color:#333;transform:scaleX(0.9909);font-weight:bold">U</div>
<div class="a" style="left:251px;top:142px;width:11px;height:1px;background:#333"></div>
<svg class="a" style="left:272px;top:133px" width="7" height="4" viewBox="0 0 7 4"><path d="M0.3,0 H6.7 L3.5,3.3 Z" fill="#666"/></svg>
<div class="a" style="left:287px;top:124px;width:1px;height:22px;background:#d4d4d4"></div>
<svg class="a" style="left:296px;top:126px" width="18" height="18" viewBox="0 0 18 18"><g fill="#555"><rect x="0" y="0" width="1" height="1"/><rect x="0" y="16" width="1" height="1"/><rect x="0" y="0" width="1" height="1"/><rect x="16" y="0" width="1" height="1"/><rect x="8" y="0" width="1" height="1"/><rect x="0" y="8" width="1" height="1"/><rect x="2" y="0" width="1" height="1"/><rect x="2" y="16" width="1" height="1"/><rect x="0" y="2" width="1" height="1"/><rect x="16" y="2" width="1" height="1"/><rect x="8" y="2" width="1" height="1"/><rect x="2" y="8" width="1" height="1"/><rect x="4" y="0" width="1" height="1"/><rect x="4" y="16" width="1" height="1"/><rect x="0" y="4" width="1" height="1"/><rect x="16" y="4" width="1" height="1"/><rect x="8" y="4" width="1" height="1"/><rect x="4" y="8" width="1" height="1"/><rect x="6" y="0" width="1" height="1"/><rect x="6" y="16" width="1" height="1"/><rect x="0" y="6" width="1" height="1"/><rect x="16" y="6" width="1" height="1"/><rect x="8" y="6" width="1" height="1"/><rect x="6" y="8" width="1" height="1"/><rect x="8" y="0" width="1" height="1"/><rect x="8" y="16" width="1" height="1"/><rect x="0" y="8" width="1" height="1"/><rect x="16" y="8" width="1" height="1"/><rect x="8" y="8" width="1" height="1"/><rect x="8" y="8" width="1" height="1"/><rect x="10" y="0" width="1" height="1"/><rect x="10" y="16" width="1" height="1"/><rect x="0" y="10" width="1" height="1"/><rect x="16" y="10" width="1" height="1"/><rect x="8" y="10" width="1" height="1"/><rect x="10" y="8" width="1" height="1"/><rect x="12" y="0" width="1" height="1"/><rect x="12" y="16" width="1" height="1"/><rect x="0" y="12" width="1" height="1"/><rect x="16" y="12" width="1" height="1"/><rect x="8" y="12" width="1" height="1"/><rect x="12" y="8" width="1" height="1"/><rect x="14" y="0" width="1" height="1"/><rect x="14" y="16" width="1" height="1"/><rect x="0" y="14" width="1" height="1"/><rect x="16" y="14" width="1" height="1"/><rect x="8" y="14" width="1" height="1"/><rect x="14" y="8" width="1" height="1"/><rect x="16" y="0" width="1" height="1"/><rect x="16" y="16" width="1" height="1"/><rect x="0" y="16" width="1" height="1"/><rect x="16" y="16" width="1" height="1"/><rect x="8" y="16" width="1" height="1"/><rect x="16" y="8" width="1" height="1"/></g><rect x="0" y="16.5" width="17" height="1.5" fill="#555"/></svg>
<svg class="a" style="left:321px;top:133px" width="7" height="4" viewBox="0 0 7 4"><path d="M0.3,0 H6.7 L3.5,3.3 Z" fill="#666"/></svg>
<div class="a" style="left:335px;top:124px;width:1px;height:22px;background:#d4d4d4"></div>
<svg class="a" style="left:342px;top:124px" width="22" height="21" viewBox="0 0 22 21"><path d="M4.3,10.2 L11,3 L17,9 L10.7,15.6 Z" fill="#fff" stroke="#555" stroke-width="1"/><path d="M8.5,4.5 V2.2 A1.3,1.3 0 0 1 11.5,2.2 V7.5" fill="none" stroke="#555" stroke-width="1"/><path d="M17,6 Q20,8 19.5,11.5 L18.5,15 Q17.5,11 17,9 Z" fill="#3f7fc7"/><rect x="1" y="15.8" width="20" height="5" fill="#ffff00"/></svg>
<svg class="a" style="left:368px;top:133px" width="7" height="4" viewBox="0 0 7 4"><path d="M0.3,0 H6.7 L3.5,3.3 Z" fill="#666"/></svg>
<div class="t" style="left:385.60px;top:125.5px;font-size:16px;color:#333;transform:scaleX(0.9917);font-weight:bold">A</div>
<div class="a" style="left:382px;top:140px;width:20px;height:5px;background:#ff0000"></div>
<svg class="a" style="left:407px;top:133px" width="7" height="4" viewBox="0 0 7 4"><path d="M0.3,0 H6.7 L3.5,3.3 Z" fill="#666"/></svg>
<div class="t" style="left:282.94px;top:164px;font-size:15px;color:#666666;transform:scaleX(0.8091)">Font</div>
<svg class="a" style="left:409px;top:169px" width="8" height="8" viewBox="0 0 8 8"><path d="M0.5,7 V0.5 H7" fill="none" stroke="#888" stroke-width="1"/><path d="M2.5,2.5 L6.5,6.5 M7.5,3.5 V7.5 H3.5" fill="none" stroke="#666" stroke-width="1.2"/></svg>
<svg class="a" style="left:0px;top:0px" width="0" height="0" viewBox="0 0 0 0"></svg>
<svg class="a" style="left:0;top:0" width="660" height="150"><rect x="431" y="88.8" width="18" height="1.3" fill="#555"/><rect x="435" y="91.9" width="11" height="1.3" fill="#555"/><rect x="431" y="95" width="18" height="1.3" fill="#555"/><rect x="457" y="92.7" width="18" height="1.3" fill="#555"/><rect x="459" y="95.8" width="14" height="1.3" fill="#555"/><rect x="457" y="98.9" width="18" height="1.3" fill="#555"/><rect x="459" y="102" width="14" height="1.3" fill="#555"/></svg>
<div class="a" style="left:479px;top:85px;width:26px;height:27px;background:#c6c6c6"></div>
<svg class="a" style="left:0;top:0" width="660" height="150"><rect x="483" y="96.6" width="18" height="1.3" fill="#555"/><rect x="485" y="99.7" width="14" height="1.3" fill="#555"/><rect x="483" y="102.8" width="18" height="1.3" fill="#555"/><rect x="485" y="105.9" width="14" height="1.3" fill="#555"/></svg>
<div class="a" style="left:509px;top:87px;width:1px;height:22px;background:#d4d4d4"></div>
<svg class="a" style="left:516px;top:88px" width="22" height="19" viewBox="0 0 22 19"><text x="2" y="13" font-family="Liberation Sans" font-size="13" fill="#555" transform="rotate(-45 8 9)">ab</text><path d="M9,17.5 L19.5,7 M14.5,6.5 H20 V12" fill="none" stroke="#555" stroke-width="1.3"/></svg>
<svg class="a" style="left:541px;top:96px" width="7" height="4" viewBox="0 0 7 4"><path d="M0.3,0 H6.7 L3.5,3.3 Z" fill="#666"/></svg>
<div class="a" style="left:556px;top:87px;width:1px;height:22px;background:#d4d4d4"></div>
<svg class="a" style="left:565px;top:93px" width="17" height="10" viewBox="0 0 17 10"><path d="M1,0.5 L5,4.5 L1,8.5 Z" fill="#3f7fc7"/><path d="M9.5,0.5 H16 M11,0.5 V9.5 M14,0.5 V9.5" stroke="#555" stroke-width="1.3"/><circle cx="10" cy="3.3" r="2.6" fill="#555"/></svg>
<svg class="a" style="left:590px;top:96px" width="7" height="4" viewBox="0 0 7 4"><path d="M0.3,0 H6.7 L3.5,3.3 Z" fill="#666"/></svg>
<div class="a" style="left:604px;top:88px;width:1px;height:56px;background:#dadada"></div>
<svg class="a" style="left:0;top:0" width="660" height="150"><path d="M613.5,89.5 H624.5 V94.5 H613.5 Z M613.5,96.5 H624.5 V106.5 H613.5 Z" fill="#fff" stroke="#666" stroke-width="1"/><rect x="615.5" y="90.8" width="14.5" height="1.3" fill="#3f7fc7"/><rect x="615.5" y="99.6" width="5.5" height="1.3" fill="#3f7fc7"/><rect x="615.5" y="102.9" width="5.5" height="1.3" fill="#3f7fc7"/><path d="M629.5,91.5 Q632,96 627,97.8 H623.5 M626,95 L623.3,97.8 L626,100.6" fill="none" stroke="#3f7fc7" stroke-width="1.7"/></svg>
<div class="t" style="left:635.30px;top:91px;font-size:15px;color:#444444;transform:scaleX(0.9783)">Wrap Text</div>
<svg class="a" style="left:0;top:0" width="660" height="150"><rect x="433" y="129.7" width="14" height="1.3" fill="#555"/><rect x="458" y="129.7" width="16" height="1.3" fill="#555"/><rect x="485" y="129.7" width="14" height="1.3" fill="#555"/><rect x="433" y="132.8" width="10.5" height="1.3" fill="#555"/><rect x="461" y="132.8" width="10" height="1.3" fill="#555"/><rect x="488.3" y="132.8" width="10.699999999999989" height="1.3" fill="#555"/><rect x="433" y="135.9" width="14" height="1.3" fill="#555"/><rect x="458" y="135.9" width="16" height="1.3" fill="#555"/><rect x="485" y="135.9" width="14" height="1.3" fill="#555"/><rect x="433" y="139" width="10.5" height="1.3" fill="#555"/><rect x="461" y="139" width="10" height="1.3" fill="#555"/><rect x="488.3" y="139" width="10.699999999999989" height="1.3" fill="#555"/></svg>
<div class="a" style="left:509px;top:125px;width:1px;height:20px;background:#d4d4d4"></div>
<svg class="a" style="left:0;top:0" width="660" height="150"><rect x="518" y="127" width="18" height="1.3" fill="#555"/><rect x="518" y="142" width="18" height="1.3" fill="#555"/><rect x="529.5" y="130" width="6.5" height="1.3" fill="#555"/><rect x="529.5" y="133" width="6.5" height="1.3" fill="#555"/><rect x="529.5" y="136.1" width="6.5" height="1.3" fill="#555"/><rect x="529.5" y="139.2" width="6.5" height="1.3" fill="#555"/><path d="M526,134.6 H519.5 M522.5,131 L519,134.6 L522.5,138.2" fill="none" stroke="#3f7fc7" stroke-width="2.2"/><rect x="544" y="127" width="18" height="1.3" fill="#555"/><rect x="544" y="142" width="18" height="1.3" fill="#555"/><rect x="555.5" y="130" width="6.5" height="1.3" fill="#555"/><rect x="555.5" y="133" width="6.5" height="1.3" fill="#555"/><rect x="555.5" y="136.1" width="6.5" height="1.3" fill="#555"/><rect x="555.5" y="139.2" width="6.5" height="1.3" fill="#555"/><path d="M544,134.6 H551 M547.5,131 L551,134.6 L547.5,138.2" fill="none" stroke="#3f7fc7" stroke-width="2.2"/></svg>
<svg class="a" style="left:0;top:0" width="660" height="150"><path d="M612.5,125.5 H630.5 V143.5 H612.5 Z M612.5,129.5 H630.5 M612.5,139.5 H630.5 M621.5,125.5 V129.5 M621.5,139.5 V143.5" fill="#fff" stroke="#666" stroke-width="1"/><path d="M615,134.5 H628.5 M617.8,132 L615,134.5 L617.8,137 M625.7,132 L628.5,134.5 L625.7,137" fill="none" stroke="#3f7fc7" stroke-width="1.4"/></svg>
<div class="t" style="left:634.70px;top:128px;font-size:15px;color:#444444;transform:scaleX(1.0040)">Merge & Center</div>
<svg class="a" style="left:751px;top:133px" width="7" height="4" viewBox="0 0 7 4"><path d="M0.3,0 H6.7 L3.5,3.3 Z" fill="#666"/></svg>
<div class="t" style="left:556.50px;top:164px;font-size:15px;color:#666666;transform:scaleX(0.8485)">Alignment</div>
<svg class="a" style="left:753px;top:169px" width="8" height="8" viewBox="0 0 8 8"><path d="M0.5,7 V0.5 H7" fill="none" stroke="#888" stroke-width="1"/><path d="M2.5,2.5 L6.5,6.5 M7.5,3.5 V7.5 H3.5" fill="none" stroke="#666" stroke-width="1.2"/></svg>
<div class="a" style="left:771px;top:85px;width:152px;height:27px;background:#fff;border:1px solid #c6c6c6"></div>
<div class="t" style="left:774.60px;top:91px;font-size:15px;color:#262626;transform:scaleX(0.9315)">General</div>
<svg class="a" style="left:912px;top:96px" width="7" height="4" viewBox="0 0 7 4"><path d="M0.3,0 H6.7 L3.5,3.3 Z" fill="#666"/></svg>
<div class="t" style="left:778.60px;top:124px;font-size:20px;color:#555;transform:scaleX(0.8909)">$</div>
<svg class="a" style="left:800px;top:132px" width="7" height="4" viewBox="0 0 7 4"><path d="M0.3,0 H6.7 L3.5,3.3 Z" fill="#666"/></svg>
<div class="t" style="left:815.00px;top:126.5px;font-size:18px;color:#555;transform:scaleX(0.9688)">%</div>
<div class="t" style="left:844.00px;top:118px;font-size:20px;color:#555;transform:scaleX(1.5000);font-weight:bold">,</div>
<div class="a" style="left:866px;top:124px;width:1px;height:21px;background:#d4d4d4"></div>
<svg class="a" style="left:875px;top:127px" width="18" height="17" viewBox="0 0 18 17"><path d="M1,3.5 H7 M4,1 L1,3.5 L4,6" fill="none" stroke="#3f7fc7" stroke-width="1.6"/><text x="7.5" y="7.5" font-family="Liberation Sans" font-size="9" fill="#555">.0</text><text x="2" y="15.5" font-family="Liberation Sans" font-size="9" fill="#555">.00</text></svg>
<svg class="a" style="left:900px;top:127px" width="18" height="17" viewBox="0 0 18 17"><text x="4" y="7.5" font-family="Liberation Sans" font-size="9" fill="#555">.00</text><path d="M2,12.5 H8 M5,10 L8,12.5 L5,15" fill="none" stroke="#3f7fc7" stroke-width="1.6"/><text x="8" y="15.5" font-family="Liberation Sans" font-size="9" fill="#555">.0</text></svg>
<div class="t" style="left:812.80px;top:164px;font-size:15px;color:#666666;transform:scaleX(0.8958)">Number</div>
<svg class="a" style="left:914px;top:169px" width="8" height="8" viewBox="0 0 8 8"><path d="M0.5,7 V0.5 H7" fill="none" stroke="#888" stroke-width="1"/><path d="M2.5,2.5 L6.5,6.5 M7.5,3.5 V7.5 H3.5" fill="none" stroke="#666" stroke-width="1.2"/></svg>
<svg class="a" style="left:958px;top:82px" width="39" height="36" viewBox="0 0 39 36"><g fill="#fff" stroke="#777" stroke-width="1"><rect x="1.5" y="1.5" width="33" height="27"/></g><path d="M1.5,8.5 H34.5 M1.5,15.5 H34.5 M1.5,22 H34.5 M12,1.5 V28.5 M23,1.5 V28.5" stroke="#999" stroke-width="1"/><rect x="12.5" y="2" width="7" height="6" fill="#e0862e"/><rect x="12.5" y="9" width="11" height="6" fill="#3f7fc7"/><rect x="12.5" y="16" width="9" height="6" fill="#e0862e"/><rect x="12.5" y="22.5" width="6" height="6" fill="#3f7fc7"/><rect x="19.5" y="20.5" width="18" height="14" fill="#fff" stroke="#777" stroke-width="1"/><text x="23" y="32" font-family="Liberation Sans" font-size="13" fill="#333">≠</text></svg>
<div class="t" style="left:937.10px;top:122px;font-size:15px;color:#444444;transform:scaleX(1.0171)">Conditional</div>
<div class="t" style="left:933.48px;top:142px;font-size:15px;color:#444444;transform:scaleX(1.0207)">Formatting</div>
<svg class="a" style="left:1011px;top:147px" width="7" height="4" viewBox="0 0 7 4"><path d="M0.3,0 H6.7 L3.5,3.3 Z" fill="#666"/></svg>
<svg class="a" style="left:1037px;top:81px" width="40" height="37" viewBox="0 0 40 37"><rect x="1.5" y="1.5" width="32" height="27" fill="#fff" stroke="#777"/><rect x="9.5" y="8.5" width="24" height="20" fill="#bcd5ea"/><path d="M1.5,8.5 H33.5 M1.5,15 H33.5 M1.5,22 H33.5 M9.5,1.5 V28.5 M17.5,1.5 V28.5 M25.5,1.5 V28.5" stroke="#999" stroke-width="1"/><path d="M37,15 L30,22 L27,25 L30,28 L33,25 Z" fill="#777"/><path d="M26,24 Q20,26 11,35 H20 Q29,33 29,28 Z" fill="#3f7fc7"/></svg>
<div class="t" style="left:1021.84px;top:122px;font-size:15px;color:#444444;transform:scaleX(0.9634)">Format as</div>
<div class="t" style="left:1032.60px;top:142px;font-size:15px;color:#444444;transform:scaleX(0.9517)">Table</div>
<svg class="a" style="left:1071px;top:147px" width="7" height="4" viewBox="0 0 7 4"><path d="M0.3,0 H6.7 L3.5,3.3 Z" fill="#666"/></svg>
<div class="a" style="left:1091px;top:77px;width:265px;height:77px;background:#fff;border:1px solid #c6c6c6"></div>
<div class="a" style="left:1092px;top:82px;width:131px;height:33px;background:#fff;border:3px solid #c6c6c6"></div>
<div class="a" style="left:1226px;top:85px;width:125px;height:27px;background:#ffc7ce"></div>
<div class="a" style="left:1095px;top:118px;width:125px;height:27px;background:#c6efce"></div>
<div class="a" style="left:1226px;top:118px;width:125px;height:27px;background:#ffeb9c"></div>
<div class="t" style="left:1099.53px;top:91px;font-size:16px;color:#000;transform:scaleX(1.0718)">Normal</div>
<div class="t" style="left:1230.61px;top:91px;font-size:16px;color:#9c0006;transform:scaleX(0.9936)">Bad</div>
<div class="t" style="left:1100.60px;top:124px;font-size:16px;color:#006100;transform:scaleX(1.0146)">Good</div>
<div class="t" style="left:1230.53px;top:124px;font-size:16px;color:#9c5700;transform:scaleX(1.0735)">Neutral</div>
<div class="a" style="left:1355px;top:77px;width:18px;height:77px;background:#fff;border:1px solid #c6c6c6"></div>
<div class="a" style="left:1356px;top:78px;width:16px;height:25px;background:#e6e6e6"></div>
<div class="a" style="left:1355px;top:103px;width:18px;height:1px;background:#c6c6c6"></div>
<div class="a" style="left:1355px;top:126px;width:18px;height:1px;background:#c6c6c6"></div>
<svg class="a" style="left:1361px;top:89px" width="7" height="4" viewBox="0 0 7 4"><path d="M0,3.5 H7 L3.5,0 Z" fill="#bbb"/></svg>
<svg class="a" style="left:1361px;top:114px" width="7" height="4" viewBox="0 0 7 4"><path d="M0.3,0 H6.7 L3.5,3.3 Z" fill="#666"/></svg>
<div class="a" style="left:1361px;top:136px;width:7px;height:1px;background:#666"></div>
<svg class="a" style="left:1361px;top:139px" width="7" height="4" viewBox="0 0 7 4"><path d="M0.3,0 H6.7 L3.5,3.3 Z" fill="#666"/></svg>
<div class="t" style="left:1137.30px;top:164px;font-size:15px;color:#666666;transform:scaleX(0.7956)">Styles</div>
<svg class="a" style="left:1390px;top:79px" width="38" height="37" viewBox="0 0 38 37"><g fill="#fff" stroke="#777" stroke-width="1.1"><rect x="4.5" y="1.5" width="9" height="6"/><rect x="13.5" y="1.5" width="9" height="6"/><rect x="4.5" y="23.5" width="9" height="6"/><rect x="13.5" y="23.5" width="9" height="6"/><rect x="4.5" y="29.5" width="9" height="6"/><rect x="13.5" y="29.5" width="9" height="6"/></g><g fill="#bcd5ea" stroke="#777" stroke-width="1.1"><rect x="18.5" y="12.5" width="9" height="6"/><rect x="27.5" y="12.5" width="9" height="6"/></g><path d="M16,15.5 H5 M8,11 L1.5,15.5 L8,20" fill="none" stroke="#3f7fc7" stroke-width="2.6"/></svg>
<div class="t" style="left:1391.46px;top:122px;font-size:15px;color:#444444;transform:scaleX(0.9425)">Insert</div>
<svg class="a" style="left:1407px;top:147px" width="7" height="4" viewBox="0 0 7 4"><path d="M0.3,0 H6.7 L3.5,3.3 Z" fill="#666"/></svg>
<svg class="a" style="left:1443px;top:79px" width="38" height="37" viewBox="0 0 38 37"><g fill="#fff" stroke="#777" stroke-width="1.1"><rect x="1.5" y="1.5" width="9" height="6"/><rect x="10.5" y="1.5" width="9" height="6"/><rect x="1.5" y="22.5" width="9" height="6"/><rect x="10.5" y="22.5" width="9" height="6"/><rect x="1.5" y="28.5" width="9" height="6"/><rect x="10.5" y="28.5" width="9" height="6"/></g><g fill="#bcd5ea" stroke="#777" stroke-width="1.1"><rect x="9" y="11.5" width="9" height="6"/></g><path d="M19,8 L35,22 M34,8 L19,22" stroke="#e0862e" stroke-width="2.2"/></svg>
<div class="t" style="left:1437.98px;top:122px;font-size:15px;color:#444444;transform:scaleX(1.0163)">Delete</div>
<svg class="a" style="left:1457px;top:147px" width="7" height="4" viewBox="0 0 7 4"><path d="M0.3,0 H6.7 L3.5,3.3 Z" fill="#666"/></svg>
<svg class="a" style="left:1493px;top:78px" width="36" height="39" viewBox="0 0 36 39"><path d="M1,2 V8 M29,2 V8 M3,5 H27 M6,2 L3,5 L6,8 M24,2 L27,5 L24,8" fill="none" stroke="#3f7fc7" stroke-width="1.3"/><rect x="1.5" y="9.5" width="33" height="24" fill="#fff" stroke="#777"/><path d="M1.5,16 H34.5 M1.5,27 H34.5 M9.5,9.5 V33.5 M19.5,9.5 V33.5 M27.5,9.5 V33.5" stroke="#999"/><rect x="10" y="16.5" width="9" height="10" fill="#3f7fc7"/><path d="M2,33.5 V37.5 H10 L12,33.5 M12,37.5 H20 L22,33.5" fill="none" stroke="#777"/></svg>
<div class="t" style="left:1486.52px;top:122px;font-size:15px;color:#444444;transform:scaleX(0.9760)">Format</div>
<svg class="a" style="left:1508px;top:147px" width="7" height="4" viewBox="0 0 7 4"><path d="M0.3,0 H6.7 L3.5,3.3 Z" fill="#666"/></svg>
<div class="t" style="left:1447.60px;top:164px;font-size:15px;color:#666666;transform:scaleX(0.7917)">Cells</div>
<svg class="a" style="left:1550px;top:79px" width="17" height="16" viewBox="0 0 17 16"><path d="M16,3.5 V1 H1.5 L8,8 L1.5,15 H16 V12.5" fill="none" stroke="#444" stroke-width="2.2"/></svg>
<div class="t" style="left:1572.75px;top:80px;font-size:15px;color:#444444;transform:scaleX(0.9722)">AutoSum</div>
<svg class="a" style="left:1643px;top:85px" width="7" height="4" viewBox="0 0 7 4"><path d="M0.3,0 H6.7 L3.5,3.3 Z" fill="#666"/></svg>
<svg class="a" style="left:1550px;top:104px" width="18" height="20" viewBox="0 0 18 20"><rect x="0.5" y="1.5" width="16" height="17" fill="#fff" stroke="#666"/><rect x="0.5" y="0.5" width="16" height="2" fill="#666"/><path d="M8.5,5 V15 M4.5,11 L8.5,15 L12.5,11" fill="none" stroke="#3f7fc7" stroke-width="2.2"/></svg>
<div class="t" style="left:1571.77px;top:106.5px;font-size:15px;color:#444444;transform:scaleX(0.9816)">Fill</div>
<svg class="a" style="left:1595px;top:112px" width="7" height="4" viewBox="0 0 7 4"><path d="M0.3,0 H6.7 L3.5,3.3 Z" fill="#666"/></svg>
<svg class="a" style="left:1550px;top:131px" width="21" height="19" viewBox="0 0 21 19"><path d="M2,12 L11,3 L16,8 L7,17 Z" fill="#f5b35c"/><path d="M5,10 L11,4 M7,12 L13,6 M9,14 L15,8" stroke="#b06cd0" stroke-width="1"/><path d="M7,17.5 H19" stroke="#444" stroke-width="1"/></svg>
<div class="t" style="left:1572.50px;top:134px;font-size:15px;color:#444444;transform:scaleX(0.9233)">Clear</div>
<svg class="a" style="left:1610px;top:139px" width="7" height="4" viewBox="0 0 7 4"><path d="M0.3,0 H6.7 L3.5,3.3 Z" fill="#666"/></svg>
<div class="t" style="left:1661.90px;top:81px;font-size:17px;color:#3f7fc7;transform:scaleX(1.0417);font-weight:bold">A</div>
<div class="t" style="left:1662.50px;top:98px;font-size:17px;color:#9b59b6;transform:scaleX(1.0600);font-weight:bold">Z</div>
<svg class="a" style="left:1677px;top:87px" width="20" height="18" viewBox="0 0 20 18"><path d="M1,1 H19 L12,8 V17 H8 V8 Z" fill="#777"/><path d="M9.5,8.5 V16" stroke="#fff" stroke-width="1"/></svg>
<div class="t" style="left:1657.50px;top:121.5px;font-size:15px;color:#444444;transform:scaleX(1.0137)">Sort &</div>
<div class="t" style="left:1656.50px;top:141.5px;font-size:15px;color:#444444;transform:scaleX(0.9973)">Filter</div>
<svg class="a" style="left:1694px;top:147px" width="7" height="4" viewBox="0 0 7 4"><path d="M0.3,0 H6.7 L3.5,3.3 Z" fill="#666"/></svg>
<svg class="a" style="left:1713px;top:79px" width="37" height="36" viewBox="0 0 37 36"><circle cx="22.5" cy="13.5" r="11" fill="#fff" stroke="#3f7fc7" stroke-width="2.6"/><path d="M14.5,21.5 L3.5,32.5" stroke="#3f7fc7" stroke-width="4.2" stroke-linecap="round"/></svg>
<div class="t" style="left:1708.38px;top:121.5px;font-size:15px;color:#444444;transform:scaleX(1.0178)">Find &</div>
<div class="t" style="left:1706.25px;top:141.5px;font-size:15px;color:#444444;transform:scaleX(0.9254)">Select</div>
<svg class="a" style="left:1750px;top:147px" width="7" height="4" viewBox="0 0 7 4"><path d="M0.3,0 H6.7 L3.5,3.3 Z" fill="#666"/></svg>
<div class="t" style="left:1631.62px;top:164px;font-size:15px;color:#666666;transform:scaleX(0.8760)">Editing</div>
<svg class="a" style="left:1897px;top:167px" width="14" height="9" viewBox="0 0 14 9"><path d="M1.5,7.5 L7,2 L12.5,7.5" fill="none" stroke="#777" stroke-width="2"/></svg>
<div class="t" style="left:13.00px;top:203px;font-size:16px;color:#000;transform:scaleX(0.9150)">A1</div>
<svg class="a" style="left:117px;top:208px" width="7" height="4" viewBox="0 0 7 4"><path d="M0.3,0 H6.7 L3.5,3.3 Z" fill="#777"/></svg>
<div class="a" style="left:150px;top:203px;width:3px;height:3px;background:#9a9a9a"></div>
<div class="a" style="left:150px;top:208px;width:3px;height:3px;background:#9a9a9a"></div>
<div class="a" style="left:150px;top:213px;width:3px;height:3px;background:#9a9a9a"></div>
<svg class="a" style="left:184px;top:203px" width="17" height="15" viewBox="0 0 17 15"><path d="M1.5,1.5 L15.5,13.5 M15.5,1.5 L1.5,13.5" stroke="#a6a6a6" stroke-width="2"/></svg>
<svg class="a" style="left:229px;top:203px" width="19" height="15" viewBox="0 0 19 15"><path d="M1.5,8 L6.5,13.5 L17.5,1.5" fill="none" stroke="#a6a6a6" stroke-width="2"/></svg>
<div class="t" style="left:273.90px;top:202px;font-size:19px;color:#444;transform:scaleX(1.2000);font-family:'Liberation Serif',serif;font-style:italic">f</div>
<div class="t" style="left:282.59px;top:203px;font-size:15px;color:#444;transform:scaleX(1.0875);font-family:'Liberation Serif',serif;font-style:italic">x</div>
<div class="t" style="left:323.94px;top:203px;font-size:16px;color:#000;transform:scaleX(1.0615)">Location</div>
<svg class="a" style="left:1897px;top:205px" width="13" height="9" viewBox="0 0 13 9"><path d="M1.5,1.5 L6.5,6.5 L11.5,1.5" fill="none" stroke="#777" stroke-width="2.6"/></svg>
<div class="t" style="left:68.80px;top:242px;font-size:16px;color:#217346;transform:scaleX(0.9743)">A</div>
<div class="t" style="left:149.11px;top:242px;font-size:16px;color:#262626;transform:scaleX(0.9159)">B</div>
<div class="t" style="left:229.21px;top:242px;font-size:16px;color:#262626;transform:scaleX(0.8292)">C</div>
<div class="t" style="left:308.47px;top:242px;font-size:16px;color:#262626;transform:scaleX(0.9568)">D</div>
<div class="t" style="left:389.61px;top:242px;font-size:16px;color:#262626;transform:scaleX(0.8222)">E</div>
<div class="t" style="left:469.87px;top:242px;font-size:16px;color:#262626;transform:scaleX(0.8448)">F</div>
<div class="t" style="left:548.33px;top:242px;font-size:16px;color:#262626;transform:scaleX(0.9109)">G</div>
<div class="t" style="left:628.40px;top:242px;font-size:16px;color:#262626;transform:scaleX(0.9690)">H</div>
<div class="t" style="left:711.74px;top:242px;font-size:16px;color:#262626;transform:scaleX(1.0185)">I</div>
<div class="t" style="left:791.14px;top:242px;font-size:16px;color:#262626;transform:scaleX(0.7162)">J</div>
<div class="t" style="left:869.33px;top:242px;font-size:16px;color:#262626;transform:scaleX(0.8748)">K</div>
<div class="t" style="left:950.22px;top:242px;font-size:16px;color:#262626;transform:scaleX(0.8490)">L</div>
<div class="t" style="left:1026.32px;top:242px;font-size:16px;color:#262626;transform:scaleX(1.1528)">M</div>
<div class="t" style="left:1108.20px;top:242px;font-size:16px;color:#262626;transform:scaleX(1.0039)">N</div>
<div class="t" style="left:1188.05px;top:242px;font-size:16px;color:#262626;transform:scaleX(0.9560)">O</div>
<div class="t" style="left:1269.36px;top:242px;font-size:16px;color:#262626;transform:scaleX(0.8699)">P</div>
<div class="t" style="left:1347.95px;top:242px;font-size:16px;color:#262626;transform:scaleX(0.9715)">Q</div>
<div class="t" style="left:1429.12px;top:242px;font-size:16px;color:#262626;transform:scaleX(0.8444)">R</div>
<div class="t" style="left:1509.87px;top:242px;font-size:16px;color:#262626;transform:scaleX(0.7737)">S</div>
<div class="t" style="left:1589.62px;top:242px;font-size:16px;color:#262626;transform:scaleX(0.8960)">T</div>
<div class="t" style="left:1668.24px;top:242px;font-size:16px;color:#262626;transform:scaleX(0.9978)">U</div>
<div class="t" style="left:1748.90px;top:242px;font-size:16px;color:#262626;transform:scaleX(0.9554)">V</div>
<div class="t" style="left:1826.01px;top:242px;font-size:16px;color:#262626;transform:scaleX(1.0586)">W</div>
<div class="t" style="left:12.45px;top:267px;font-size:16px;color:#217346;transform:scaleX(1.0235)">1</div>
<div class="t" style="left:12.45px;top:291px;font-size:16px;color:#262626;transform:scaleX(1.0235)">2</div>
<div class="t" style="left:12.45px;top:315px;font-size:16px;color:#262626;transform:scaleX(1.0235)">3</div>
<div class="t" style="left:12.45px;top:339px;font-size:16px;color:#262626;transform:scaleX(1.0235)">4</div>
<div class="t" style="left:12.45px;top:363px;font-size:16px;color:#262626;transform:scaleX(1.0235)">5</div>
<div class="t" style="left:12.45px;top:387px;font-size:16px;color:#262626;transform:scaleX(1.0235)">6</div>
<div class="t" style="left:12.45px;top:411px;font-size:16px;color:#262626;transform:scaleX(1.0235)">7</div>
<div class="t" style="left:12.45px;top:435px;font-size:16px;color:#262626;transform:scaleX(1.0235)">8</div>
<div class="t" style="left:12.45px;top:459px;font-size:16px;color:#262626;transform:scaleX(1.0235)">9</div>
<div class="t" style="left:7.89px;top:483px;font-size:16px;color:#262626;transform:scaleX(1.0235)">10</div>
<div class="t" style="left:7.89px;top:507px;font-size:16px;color:#262626;transform:scaleX(1.0967)">11</div>
<div class="t" style="left:7.89px;top:531px;font-size:16px;color:#262626;transform:scaleX(1.0235)">12</div>
<div class="t" style="left:7.89px;top:555px;font-size:16px;color:#262626;transform:scaleX(1.0235)">13</div>
<div class="t" style="left:7.89px;top:579px;font-size:16px;color:#262626;transform:scaleX(1.0235)">14</div>
<div class="t" style="left:7.89px;top:603px;font-size:16px;color:#262626;transform:scaleX(1.0235)">15</div>
<div class="t" style="left:7.89px;top:627px;font-size:16px;color:#262626;transform:scaleX(1.0235)">16</div>
<div class="t" style="left:7.89px;top:651px;font-size:16px;color:#262626;transform:scaleX(1.0235)">17</div>
<div class="t" style="left:7.89px;top:675px;font-size:16px;color:#262626;transform:scaleX(1.0235)">18</div>
<div class="t" style="left:7.89px;top:699px;font-size:16px;color:#262626;transform:scaleX(1.0235)">19</div>
<div class="t" style="left:7.89px;top:723px;font-size:16px;color:#262626;transform:scaleX(1.0235)">20</div>
<div class="t" style="left:7.89px;top:747px;font-size:16px;color:#262626;transform:scaleX(1.0235)">21</div>
<div class="t" style="left:7.89px;top:771px;font-size:16px;color:#262626;transform:scaleX(1.0235)">22</div>
<div class="t" style="left:7.89px;top:795px;font-size:16px;color:#262626;transform:scaleX(1.0235)">23</div>
<div class="t" style="left:7.89px;top:819px;font-size:16px;color:#262626;transform:scaleX(1.0235)">24</div>
<div class="t" style="left:7.89px;top:843px;font-size:16px;color:#262626;transform:scaleX(1.0235)">25</div>
<div class="t" style="left:7.89px;top:867px;font-size:16px;color:#262626;transform:scaleX(1.0235)">26</div>
<div class="t" style="left:7.89px;top:891px;font-size:16px;color:#262626;transform:scaleX(1.0235)">27</div>
<div class="t" style="left:7.89px;top:915px;font-size:16px;color:#262626;transform:scaleX(1.0235)">28</div>
<div class="t" style="left:7.89px;top:939px;font-size:16px;color:#262626;transform:scaleX(1.0235)">29</div>
<div class="t" style="left:7.89px;top:963px;font-size:16px;color:#262626;transform:scaleX(1.0235)">30</div>
<div class="a" style="left:514px;top:957px;width:321px;height:7px;background:#fff"></div>
<div class="t" style="left:38.70px;top:962px;font-size:16px;color:#000;transform:scaleX(0.9742)">Chicago</div>
<div class="t" style="left:118.70px;top:962px;font-size:16px;color:#000;transform:scaleX(0.9997)">2 beds</div>
<div class="t" style="left:197.60px;top:962px;font-size:16px;color:#000;transform:scaleX(1.0961)">1 bath</div>
<div class="t" style="left:308.44px;top:962px;font-size:16px;color:#000;transform:scaleX(1.0453)">1,100</div>
<div class="t" style="left:359.50px;top:962px;font-size:16px;color:#000;transform:scaleX(0.9875)">$189,000</div>
<div class="t" style="left:438.00px;top:962px;font-size:16px;color:#000;transform:scaleX(1.0441)">/IL/Chicago/4131-N-Kildare-Ave-60641/home/13462417</div>
<div class="a" style="left:1895px;top:237px;width:24px;height:727px;background:#e6e6e6"></div>
<div class="a" style="left:1898px;top:239px;width:19px;height:19px;background:#fff;border:1px solid #d0d0d0"></div>
<svg class="a" style="left:1903px;top:245px" width="9" height="5" viewBox="0 0 9 5"><path d="M0,4.5 H9 L4.5,0 Z" fill="#666"/></svg>
<div class="a" style="left:1898px;top:258px;width:19px;height:689px;background:#dadada"></div>
<div class="a" style="left:1898px;top:258px;width:19px;height:56px;background:#fff;border:1px solid #a6a6a6"></div>
<div class="a" style="left:1898px;top:946px;width:19px;height:18px;background:#fff;border:1px solid #d0d0d0"></div>
<svg class="a" style="left:1903px;top:953px" width="9" height="5" viewBox="0 0 9 5"><path d="M0,0 H9 L4.5,4.5 Z" fill="#666"/></svg>
<div class="a" style="left:0px;top:964px;width:1919px;height:29px;background:#e6e6e6"></div>
<div class="a" style="left:0px;top:964px;width:1895px;height:1px;background:#9b9b9b"></div>
<svg class="a" style="left:27px;top:975px" width="8" height="10" viewBox="0 0 8 10"><path d="M6.5,0.5 V9.5 L1,5 Z" fill="#bdbdbd"/></svg>
<svg class="a" style="left:55px;top:975px" width="8" height="10" viewBox="0 0 8 10"><path d="M1.5,0.5 V9.5 L7,5 Z" fill="#9a9a9a"/></svg>
<div class="a" style="left:103px;top:964px;width:79px;height:26px;background:#fff;border-left:1px solid #aaa;border-right:1px solid #aaa"></div>
<div class="a" style="left:103px;top:988px;width:79px;height:2px;background:#217346"></div>
<div class="t" style="left:114.16px;top:968px;font-size:16px;color:#217346;transform:scaleX(1.0447);font-weight:bold">Homes</div>
<svg class="a" style="left:214px;top:967px" width="22" height="22" viewBox="0 0 22 22"><circle cx="11" cy="11" r="9.8" fill="none" stroke="#777" stroke-width="1.2"/><path d="M11,5.5 V16.5 M5.5,11 H16.5" stroke="#666" stroke-width="1.6"/></svg>
<div class="a" style="left:1149px;top:972px;width:3px;height:3px;background:#9a9a9a"></div>
<div class="a" style="left:1149px;top:977px;width:3px;height:3px;background:#9a9a9a"></div>
<div class="a" style="left:1149px;top:982px;width:3px;height:3px;background:#9a9a9a"></div>
<div class="a" style="left:1167px;top:969px;width:19px;height:19px;background:#fff;border:1px solid #d0d0d0"></div>
<svg class="a" style="left:1172px;top:973px" width="6" height="10" viewBox="0 0 6 10"><path d="M5.5,0 V10 L0,5 Z" fill="#666"/></svg>
<div class="a" style="left:1186px;top:969px;width:690px;height:19px;background:#dadada"></div>
<div class="a" style="left:1186px;top:969px;width:660px;height:19px;background:#fff;border:1px solid #a6a6a6"></div>
<div class="a" style="left:1876px;top:969px;width:19px;height:19px;background:#fff;border:1px solid #d0d0d0"></div>
<svg class="a" style="left:1882px;top:973px" width="6" height="10" viewBox="0 0 6 10"><path d="M0.5,0 V10 L6,5 Z" fill="#666"/></svg>
<div class="a" style="left:0px;top:993px;width:1919px;height:23px;background:#f1f1f1"></div>
<div class="a" style="left:0px;top:993px;width:1919px;height:1px;background:#c8c8c8"></div>
<div class="t" style="left:6.68px;top:999px;font-size:15px;color:#444;transform:scaleX(0.8213)">Ready</div>
<div class="a" style="left:1582px;top:994px;width:41px;height:22px;background:#c6c6c6"></div>
<svg class="a" style="left:1594px;top:999px" width="15" height="14" viewBox="0 0 15 14"><path d="M0.5,0.5 H14.5 V13.5 H0.5 Z M0.5,4.5 H14.5 M0.5,9 H14.5 M5,0.5 V13.5 M10,0.5 V13.5" fill="none" stroke="#555" stroke-width="1"/></svg>
<svg class="a" style="left:1635px;top:999px" width="15" height="14" viewBox="0 0 15 14"><path d="M0.5,0.5 H14.5 V13.5 H0.5 Z" fill="none" stroke="#555" stroke-width="1"/><path d="M3.5,3 V11 H11.5 V3 Z M5,5 H10 M5,7 H10 M5,9 H10" fill="none" stroke="#555" stroke-width="1"/></svg>
<svg class="a" style="left:1676px;top:999px" width="15" height="14" viewBox="0 0 15 14"><path d="M0.5,0.5 H14.5 V13.5 H0.5 Z M0.5,9 H7.5 V0.5" fill="none" stroke="#555" stroke-width="1"/></svg>
<div class="a" style="left:1710px;top:1005px;width:10px;height:2px;background:#555"></div>
<div class="a" style="left:1723px;top:1006px;width:124px;height:1px;background:#9a9a9a"></div>
<div class="a" style="left:1783px;top:999px;width:5px;height:13px;background:#555"></div>
<svg class="a" style="left:1851px;top:999px" width="13" height="13" viewBox="0 0 13 13"><path d="M6.5,0 V13 M0,6.5 H13" stroke="#555" stroke-width="2"/></svg>
<div class="t" style="left:1878.16px;top:999px;font-size:15px;color:#444;transform:scaleX(0.8372)">100%</div>
<div class="t" style="left:1554.50px;top:919px;font-size:27px;color:rgba(120,120,120,0.5);transform:scaleX(0.9230)">Activate Windows</div>
<div class="t" style="left:1554.00px;top:952px;font-size:17px;color:rgba(120,120,120,0.45);transform:scaleX(1.0575)">Go to Settings to activate Windows.</div>
<div class="t" style="left:841.65px;top:955.5px;font-size:41px;color:rgba(0,0,0,0.1);transform:scaleX(0.9238);font-weight:bold">mostaql.com</div>
<svg class="a" style="left:840px;top:886px" width="240" height="75" viewBox="0 0 240 75"><g opacity="0.1" fill="#000" stroke="#000"><path d="M43,6 V62" stroke-width="10" stroke-linecap="round" fill="none"/><path d="M43,62 Q10,70 8,40" stroke-width="10" stroke-linecap="round" fill="none"/><circle cx="86" cy="40" r="12" stroke-width="10" fill="none"/><circle cx="73" cy="11" r="6.5" stroke="none"/><circle cx="89" cy="11" r="6.5" stroke="none"/><circle cx="113" cy="24" r="6.5" stroke="none"/><circle cx="130" cy="24" r="6.5" stroke="none"/><path d="M98,54 H200" stroke-width="11" fill="none"/><path d="M122,38 V54 M144,38 V54 M176,34 V54" stroke-width="10" stroke-linecap="round" fill="none"/><circle cx="212" cy="48" r="16" stroke-width="10" fill="none"/></g></svg>
</body></html>
